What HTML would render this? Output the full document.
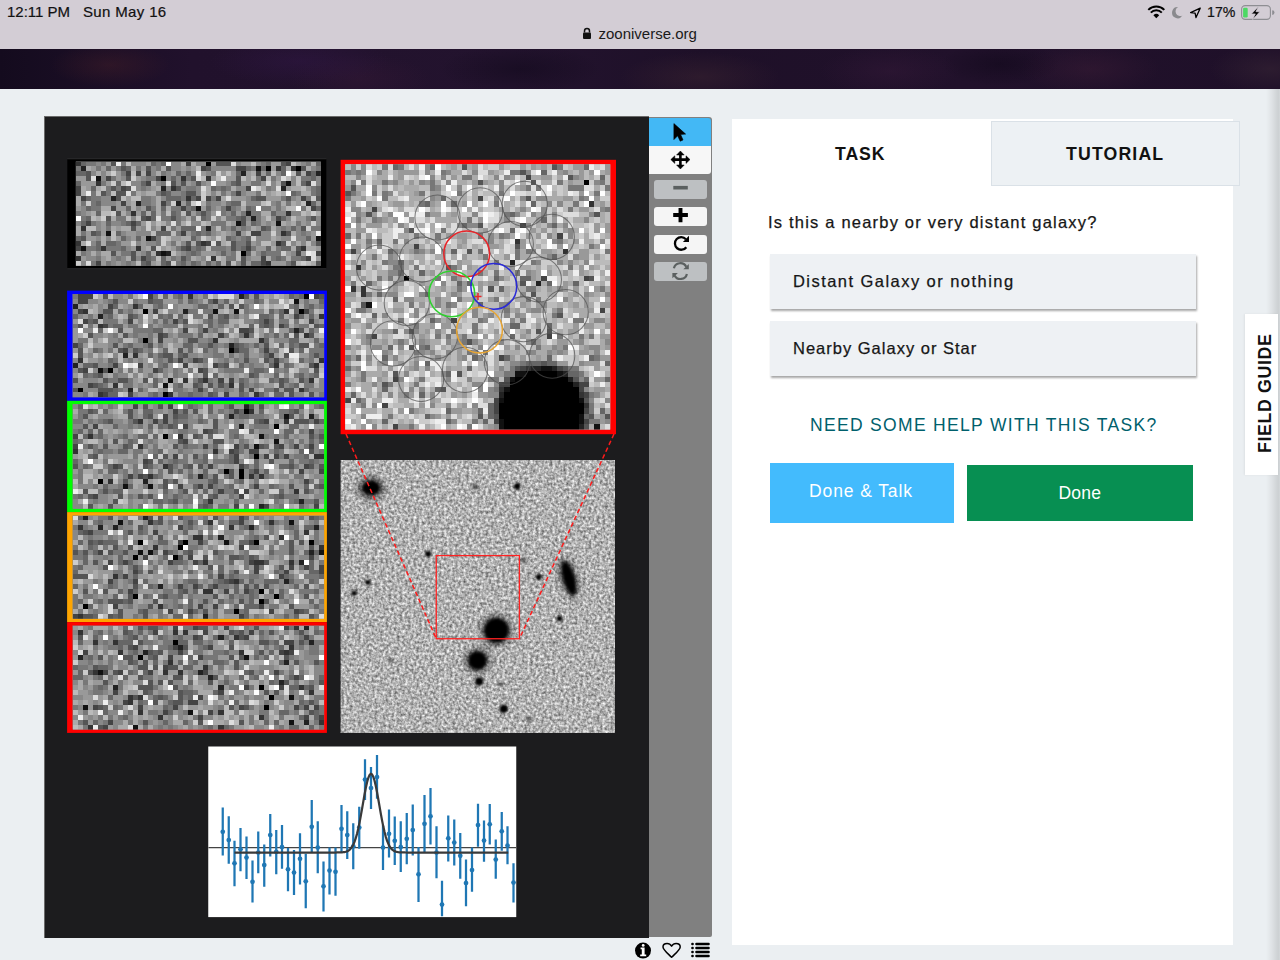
<!DOCTYPE html>
<html><head><meta charset="utf-8">
<style>
html,body{margin:0;padding:0;}
body{width:1280px;height:960px;position:relative;overflow:hidden;background:#ebeff2;font-family:"Liberation Sans",sans-serif;}
.abs{position:absolute;}
#status{left:0;top:0;width:1280px;height:49px;background:#d3cdd5;}
#status .t{position:absolute;top:3px;font-size:15px;color:#111;line-height:20px;-webkit-text-stroke:0.2px #111;}
#hdr{left:0;top:49px;width:1280px;height:40px;background:#1a0f26;overflow:hidden;}
#viewer{left:44px;top:116px;width:605px;height:822px;background:#1c1c1e;border-left:1px solid #6a6a6a;border-top:1px solid #6a6a6a;box-sizing:border-box;}
#tools{left:649px;top:117px;width:63px;height:820px;background:#808080;border-radius:0 3px 2px 0;}
.tb{position:absolute;left:5px;width:53px;height:19px;background:#f5f5f5;border-radius:3px;}
.tb.dis{background:#bdc0c2;}
#panel{left:732px;top:118.6px;width:501px;height:826.4px;background:#fff;}
#tut{left:991px;top:121px;width:249px;height:65px;background:#edf1f4;border:1px solid #dae1e7;box-sizing:border-box;}
.tab{position:absolute;font-weight:bold;font-size:17.7px;letter-spacing:0.9px;color:#111;line-height:20px;}
.q{position:absolute;font-size:16.5px;color:#161616;line-height:20px;-webkit-text-stroke:0.25px #161616;}
.ans{position:absolute;left:770px;width:426px;height:55px;background:#eef1f4;box-shadow:1px 2px 2px rgba(0,0,0,0.35);}
.ans span{position:absolute;left:25px;top:17px;font-size:16.5px;color:#161616;line-height:20px;-webkit-text-stroke:0.25px #161616;}
#help{left:810px;top:414.5px;font-size:17.5px;letter-spacing:1.32px;color:#00606c;line-height:20px;}
#dtalk{left:770px;top:463px;width:184px;height:60px;background:#43bbfd;}
#done{left:967px;top:465px;width:226px;height:56px;background:#078f52;}
.btxt{position:absolute;font-size:17.5px;color:#fff;line-height:20px;white-space:nowrap;}
#fg{left:1245px;top:313.5px;width:33px;height:161px;background:#fff;box-shadow:-1px 0 2px rgba(0,0,0,0.06);}
#fgt{position:absolute;left:1258px;top:453px;transform-origin:0 0;transform:rotate(-90deg);font-weight:bold;font-size:17.8px;letter-spacing:0.62px;color:#111;line-height:14px;white-space:nowrap;}
#edge{left:1266px;top:89px;width:14px;height:871px;background:linear-gradient(90deg,rgba(0,0,0,0),rgba(0,0,0,0.05) 40%,rgba(0,0,0,0.11) 75%,rgba(0,0,0,0.13) 88%,rgba(0,0,0,0.1));}
</style></head><body>
<div id="status" class="abs">
  <div class="t" style="left:7px;top:2px;">12:11 PM</div>
  <div class="t" style="left:83px;top:2px;letter-spacing:0.35px;">Sun May 16</div>
  <div class="t" style="left:598.5px;top:24px;-webkit-text-stroke:0;color:#1a1a1a;">zooniverse.org</div>
  <svg class="abs" style="left:582px;top:27px" width="10" height="13" viewBox="0 0 10 13"><path d="M2.5 5.5V4a2.5 2.5 0 0 1 5 0v1.5" fill="none" stroke="#111" stroke-width="1.5"/><rect x="1" y="5.5" width="8" height="6.5" rx="1" fill="#111"/></svg>
  <div class="t" style="left:1207px;top:2px;font-size:14.2px;">17%</div>
  <svg class="abs" style="left:1140px;top:0" width="140" height="26" viewBox="1140 0 140 26">
    <path d="M1156.3 18.2L1159.2 15.3A4.1 4.1 0 0 0 1153.4 15.3Z" fill="#000"/>
    <path d="M1150.8 12.6A7.8 7.8 0 0 1 1161.8 12.6" fill="none" stroke="#000" stroke-width="2"/>
    <path d="M1148.3 9.9A11.3 11.3 0 0 1 1164.3 9.9" fill="none" stroke="#000" stroke-width="2"/>
    <path d="M1178.2 7.1A5.6 5.6 0 1 0 1182.4 15.6A4.3 4.3 0 0 1 1178.2 7.1Z" fill="#8a8a8e"/>
    <path d="M1200.2 8.2L1190.6 12.6L1195.1 13.2L1196 17.6Z" fill="none" stroke="#000" stroke-width="1.3" stroke-linejoin="round"/>
    <rect x="1241.6" y="5.6" width="28.8" height="13.8" rx="3.6" fill="none" stroke="#8e8e93" stroke-width="1.1"/>
    <rect x="1243.1" y="7.7" width="4.6" height="9.8" rx="1.2" fill="#4cd964"/>
    <path d="M1258.5 6.6L1251.4 13.9H1255.3L1252.7 19.6L1259.8 11.7H1255.9Z" fill="#000" stroke="#d3cdd5" stroke-width="0.7"/>
    <path d="M1272.2 10.3A2.3 2.3 0 0 1 1272.2 14.9Z" fill="#8e8e93"/>
  </svg>
</div>
<div id="hdr" class="abs">
  <div class="abs" style="left:0;top:0;width:1280px;height:40px;background:
  radial-gradient(ellipse 60px 22px at 110px 16px, rgba(80,35,40,0.35), transparent),
  radial-gradient(ellipse 90px 25px at 300px 12px, rgba(55,25,80,0.35), transparent),
  radial-gradient(ellipse 70px 25px at 360px 30px, rgba(70,30,60,0.25), transparent),
  radial-gradient(ellipse 80px 25px at 700px 28px, rgba(80,50,55,0.3), transparent),
  radial-gradient(ellipse 80px 25px at 520px 20px, rgba(10,5,20,0.4), transparent),
  radial-gradient(ellipse 70px 25px at 890px 22px, rgba(65,30,65,0.3), transparent),
  radial-gradient(ellipse 60px 22px at 1000px 15px, rgba(10,5,20,0.4), transparent),
  radial-gradient(ellipse 70px 25px at 1090px 20px, rgba(75,35,60,0.3), transparent),
  radial-gradient(ellipse 60px 25px at 1270px 20px, rgba(70,50,60,0.35), transparent),
  linear-gradient(90deg,#140b1e,#21112c 15%,#23132e 40%,#1e1028 55%,#21112b 75%,#1f1029);"></div>
</div>
<div id="viewer" class="abs"></div>
<div id="tools" class="abs">
  <div class="abs" style="left:0;top:1px;width:62px;height:28px;background:#43b8f5;border-radius:0 3px 0 0;"></div>
  <div class="abs" style="left:0;top:29px;width:62px;height:28px;background:#f7f7f7;border-radius:0 0 3px 0;"></div>
  <div class="tb dis" style="top:63px;"></div>
  <div class="tb" style="top:90px;"></div>
  <div class="tb" style="top:118px;"></div>
  <div class="tb dis" style="top:145px;"></div>
</div>
<svg class="abs" style="left:649px;top:115px" width="63" height="180" viewBox="649 115 63 180">
  <path d="M673.9 123.6L685.6 134.1L680.6 134.4L683 139.9L680.2 141.2L677.7 135.8L673.9 139.6Z" fill="#000" stroke="#000" stroke-width="0.6" stroke-linejoin="round"/>
  <path d="M680.4 153.5V166.5M673.5 159.6H687.5" stroke="#000" stroke-width="2.6"/>
  <path d="M680.4 151L684.2 155H676.6ZM680.4 169L684.2 165H676.6ZM670.8 159.6L674.8 155.8V163.4ZM690 159.6L686 155.8V163.4Z" fill="#000" stroke="#000" stroke-width="0.5" stroke-linejoin="round"/>
  <path d="M673.3 187.7H687.8" stroke="#5b6060" stroke-width="3.6" stroke-linecap="butt" stroke-linejoin="round"/>
  <path d="M673.2 215.05H687.9M680.5 208V222.2" stroke="#000" stroke-width="3.9"/>
  <path d="M686.3 247.2A6.3 6.3 0 1 1 685.9 239.2" fill="none" stroke="#000" stroke-width="2.3"/>
  <path d="M689 235.8V241.9H682.9Z" fill="#000"/>
  <path d="M673.9 268.3A6.6 6.6 0 0 1 686.2 266.8" fill="none" stroke="#5b6060" stroke-width="2.2"/>
  <path d="M688.8 263.9V269.3H683.3Z" fill="#5b6060"/>
  <path d="M686.9 273.9A6.6 6.6 0 0 1 674.6 275.4" fill="none" stroke="#5b6060" stroke-width="2.2"/>
  <path d="M672.4 278.3V272.9H677.9Z" fill="#5b6060"/>
</svg>
<svg class="abs" style="left:630px;top:938px" width="85" height="22" viewBox="630 938 85 22">
  <circle cx="643" cy="950.6" r="8" fill="#000"/>
  <circle cx="643.2" cy="945.4" r="1.4" fill="#fff"/>
  <path d="M640.6 947.6H644.6V954.6H646.2V956.3H640.2V954.6H641.8V949.3H640.6Z" fill="#fff"/>
  <path d="M671.6 957.3C667.6 953.3 663 949.6 663 946.9C663 944.6 664.9 943.5 667.1 943.5C669.1 943.5 670.7 944.7 671.6 946.2C672.5 944.7 674.1 943.5 676.1 943.5C678.3 943.5 680.2 944.6 680.2 946.9C680.2 949.6 675.6 953.3 671.6 957.3Z" fill="none" stroke="#000" stroke-width="1.5" stroke-linejoin="round"/>
  <path d="M692.4 944H692.6M692.4 948H692.6M692.4 952H692.6M692.4 956H692.6" stroke="#000" stroke-width="2.5" stroke-linecap="round"/>
  <path d="M696.4 944H708.6M696.4 948H708.6M696.4 952H708.6M696.4 956H708.6" stroke="#000" stroke-width="2.4" stroke-linecap="round"/>
</svg>
<svg class="abs" style="left:0;top:0" width="1280" height="960" viewBox="0 0 1280 960"><defs><filter id="nz" x="0" y="0" width="100%" height="100%" color-interpolation-filters="sRGB"><feTurbulence type="fractalNoise" baseFrequency="0.36" numOctaves="2" seed="3" result="t"/><feColorMatrix in="t" type="matrix" values="0.85 0 0 0 0.27  0.85 0 0 0 0.27  0.85 0 0 0 0.27  0 0 0 0 1"/><feGaussianBlur stdDeviation="0.5"/></filter><filter id="soft" x="0" y="0" width="100%" height="100%"><feGaussianBlur stdDeviation="0.55"/></filter><filter id="bl" x="-1" y="-1" width="3" height="3"><feGaussianBlur stdDeviation="1.6"/></filter><filter id="bl2" x="-1" y="-1" width="3" height="3"><feGaussianBlur stdDeviation="1"/></filter><filter id="bl3" x="-1" y="-1" width="3" height="3"><feGaussianBlur stdDeviation="3"/></filter></defs><rect x="67.3" y="159.2" width="259" height="109.1" fill="#000"/>
<rect x="67.3" y="158.2" width="259" height="1" fill="#2a2a2c"/><rect x="67.3" y="268.3" width="259" height="1" fill="#2a2a2c"/>
<rect x="75.8" y="161.5" width="245" height="104.3" fill="#868686"/><svg x="75.8" y="161.5" width="245" height="104.3" viewBox="0 0 49 21" preserveAspectRatio="none" shape-rendering="crispEdges"><g stroke-width="1"><path stroke="#000000" d="M26 0.5h1M38 1.5h1M44 1.5h1M17 3.5h1M33 18.5h1"/><path stroke="#111111" d="M36 1.5h1M4 3.5h1M42 4.5h1M24 9.5h1M32 12.5h1M40 12.5h1M6 14.5h1M14 15.5h1M48 15.5h1M1 17.5h1M17 18.5h1"/><path stroke="#222222" d="M1 1.5h1M33 2.5h1M48 2.5h1M17 5.5h1M41 5.5h1M7 7.5h1M12 8.5h1M20 8.5h1M46 8.5h1M34 10.5h1M35 11.5h1M26 13.5h1M18 18.5h1"/><path stroke="#333333" d="M0 0.5h1M40 1.5h1M43 1.5h1M21 3.5h1M26 3.5h1M4 4.5h1M19 5.5h1M22 7.5h1M11 10.5h1M42 10.5h1M1 13.5h1M41 14.5h1M0 16.5h1M25 16.5h1M40 16.5h1M5 17.5h1M12 17.5h1M45 17.5h1M16 18.5h1M0 19.5h1M27 19.5h1M38 20.5h1"/><path stroke="#444444" d="M22 0.5h1M42 0.5h1M25 1.5h1M32 1.5h2M10 2.5h1M12 2.5h1M14 2.5h1M36 2.5h1M46 2.5h1M6 3.5h1M16 3.5h1M37 3.5h1M14 4.5h1M46 4.5h1M0 5.5h1M9 5.5h1M34 5.5h1M0 6.5h1M32 6.5h1M1 7.5h1M24 7.5h1M26 7.5h1M28 7.5h1M45 7.5h1M9 8.5h1M17 8.5h1M7 9.5h1M21 9.5h1M30 9.5h1M47 9.5h1M14 11.5h1M40 11.5h1M2 12.5h1M11 12.5h1M17 13.5h1M21 14.5h1M32 14.5h1M35 14.5h2M15 15.5h1M26 16.5h1M0 17.5h1M22 17.5h1M34 17.5h1M44 18.5h1M48 18.5h1M13 19.5h1M37 19.5h1M46 19.5h1M4 20.5h1M37 20.5h1"/><path stroke="#555555" d="M7 0.5h1M28 0.5h3M41 0.5h1M9 1.5h1M14 1.5h1M18 1.5h1M26 1.5h1M45 1.5h1M2 2.5h1M44 2.5h1M2 3.5h1M10 3.5h1M23 3.5h1M32 3.5h1M19 4.5h1M21 4.5h1M24 4.5h1M32 4.5h1M41 4.5h1M7 5.5h1M10 5.5h1M20 5.5h1M5 6.5h1M8 6.5h2M17 6.5h1M22 6.5h2M8 7.5h1M36 7.5h2M42 7.5h1M48 7.5h1M14 9.5h1M8 10.5h1M22 10.5h1M25 10.5h1M6 11.5h1M13 11.5h1M19 11.5h1M33 11.5h1M47 11.5h1M33 12.5h1M11 13.5h1M37 13.5h1M45 13.5h1M3 14.5h1M42 14.5h1M1 15.5h1M22 16.5h1M24 16.5h1M28 16.5h1M31 16.5h1M34 16.5h1M41 16.5h1M48 16.5h1M15 17.5h1M21 17.5h1M31 17.5h1M44 17.5h1M7 18.5h1M11 18.5h1M11 19.5h1M21 19.5h1M33 19.5h1M14 20.5h1M18 20.5h1M30 20.5h1M33 20.5h1M43 20.5h1M48 20.5h1"/><path stroke="#666666" d="M1 0.5h1M15 0.5h1M17 0.5h1M38 0.5h1M48 0.5h1M6 1.5h1M10 1.5h1M34 1.5h1M37 1.5h1M41 1.5h1M0 2.5h2M20 2.5h1M22 2.5h1M32 2.5h1M38 2.5h1M41 2.5h1M47 2.5h1M19 3.5h1M47 3.5h1M0 4.5h1M8 4.5h1M13 4.5h1M31 4.5h1M45 4.5h1M3 5.5h1M27 5.5h1M29 5.5h1M48 5.5h1M18 6.5h1M43 6.5h1M48 6.5h1M2 7.5h1M18 7.5h3M23 7.5h1M35 7.5h1M4 8.5h1M22 8.5h1M31 8.5h2M47 8.5h1M2 9.5h1M10 9.5h1M17 9.5h1M23 9.5h1M26 9.5h1M34 9.5h1M48 9.5h1M4 10.5h1M13 10.5h1M15 10.5h1M19 10.5h1M31 10.5h1M39 10.5h1M2 11.5h1M15 11.5h1M25 11.5h1M32 11.5h1M41 11.5h1M1 12.5h1M6 12.5h1M10 12.5h1M12 12.5h1M35 12.5h1M21 13.5h3M31 13.5h1M38 13.5h1M43 13.5h1M4 14.5h1M8 14.5h1M16 14.5h3M24 14.5h1M26 14.5h1M0 15.5h1M9 15.5h1M12 15.5h1M23 15.5h1M30 15.5h1M34 15.5h1M46 15.5h1M4 16.5h1M6 16.5h2M4 17.5h1M9 17.5h1M24 17.5h1M33 17.5h1M38 17.5h1M41 17.5h2M14 18.5h1M23 18.5h1M29 18.5h1M34 18.5h1M37 18.5h1M14 19.5h1M17 19.5h1M40 19.5h1M45 19.5h1M13 20.5h1M17 20.5h1M21 20.5h1M23 20.5h1M26 20.5h1M28 20.5h1M35 20.5h2"/><path stroke="#777777" d="M2 0.5h2M5 0.5h1M9 0.5h1M16 0.5h1M37 0.5h1M46 0.5h1M0 1.5h1M4 1.5h1M8 1.5h1M12 1.5h1M16 1.5h1M35 1.5h1M48 1.5h1M9 2.5h1M17 2.5h1M27 2.5h1M7 3.5h1M14 3.5h2M22 3.5h1M36 3.5h1M39 3.5h1M45 3.5h2M5 4.5h1M17 4.5h1M35 4.5h2M6 5.5h1M8 5.5h1M13 5.5h1M22 5.5h2M28 5.5h1M30 5.5h1M38 5.5h1M47 5.5h1M3 6.5h1M6 6.5h1M11 6.5h1M16 6.5h1M21 6.5h1M29 6.5h1M31 6.5h1M36 6.5h1M44 6.5h1M47 6.5h1M3 7.5h2M13 7.5h2M21 7.5h1M27 7.5h1M41 7.5h1M46 7.5h1M1 8.5h1M3 8.5h1M13 8.5h2M18 8.5h1M26 8.5h1M30 8.5h1M40 8.5h1M42 8.5h1M3 9.5h2M15 9.5h1M19 9.5h2M22 9.5h1M29 9.5h1M31 9.5h1M35 9.5h1M37 9.5h2M40 9.5h1M45 9.5h1M0 10.5h1M17 10.5h1M20 10.5h1M24 10.5h1M26 10.5h1M29 10.5h1M33 10.5h1M35 10.5h2M1 11.5h1M8 11.5h2M17 11.5h2M20 11.5h1M23 11.5h1M26 11.5h1M30 11.5h2M36 11.5h1M46 11.5h1M3 12.5h1M9 12.5h1M20 12.5h1M27 12.5h3M36 12.5h1M44 12.5h1M6 13.5h1M19 13.5h1M25 13.5h1M29 13.5h1M33 13.5h1M41 13.5h1M47 13.5h2M1 14.5h1M20 14.5h1M23 14.5h1M25 14.5h1M45 14.5h1M16 15.5h1M31 15.5h1M33 15.5h1M8 16.5h1M16 16.5h1M19 16.5h1M32 16.5h2M2 17.5h2M6 17.5h3M20 17.5h1M23 17.5h1M25 17.5h1M27 17.5h3M32 17.5h1M35 17.5h1M40 17.5h1M1 18.5h1M9 18.5h2M22 18.5h1M24 18.5h1M31 18.5h1M38 18.5h3M4 19.5h1M8 19.5h1M15 19.5h1M19 19.5h1M22 19.5h1M30 19.5h2M39 19.5h1M41 19.5h1M43 19.5h2M3 20.5h1M6 20.5h1M10 20.5h1M20 20.5h1M24 20.5h1M42 20.5h1"/><path stroke="#888888" d="M4 0.5h1M11 0.5h3M19 0.5h2M24 0.5h2M32 0.5h1M36 0.5h1M45 0.5h1M15 1.5h1M19 1.5h2M22 1.5h1M27 1.5h5M47 1.5h1M3 2.5h1M5 2.5h1M15 2.5h1M18 2.5h1M21 2.5h1M23 2.5h1M26 2.5h1M40 2.5h1M5 3.5h1M9 3.5h1M13 3.5h1M18 3.5h1M20 3.5h1M43 3.5h1M48 3.5h1M11 4.5h2M16 4.5h1M20 4.5h1M23 4.5h1M25 4.5h1M30 4.5h1M39 4.5h1M43 4.5h1M48 4.5h1M12 5.5h1M14 5.5h1M18 5.5h1M21 5.5h1M24 5.5h1M32 5.5h2M39 5.5h1M19 6.5h2M24 6.5h1M27 6.5h1M33 6.5h1M5 7.5h2M15 7.5h1M17 7.5h1M34 7.5h1M43 7.5h1M5 8.5h3M15 8.5h1M27 8.5h2M34 8.5h3M39 8.5h1M1 9.5h1M12 9.5h1M27 9.5h1M32 9.5h1M1 10.5h1M10 10.5h1M30 10.5h1M40 10.5h2M43 10.5h2M11 11.5h1M21 11.5h1M28 11.5h1M34 11.5h1M39 11.5h1M42 11.5h1M48 11.5h1M0 12.5h1M4 12.5h1M7 12.5h2M18 12.5h1M23 12.5h2M38 12.5h1M46 12.5h1M48 12.5h1M4 13.5h1M13 13.5h1M15 13.5h1M27 13.5h1M30 13.5h1M32 13.5h1M34 13.5h1M40 13.5h1M42 13.5h1M44 13.5h1M9 14.5h1M12 14.5h3M27 14.5h1M31 14.5h1M37 14.5h2M40 14.5h1M44 14.5h1M46 14.5h1M4 15.5h1M6 15.5h1M10 15.5h1M24 15.5h1M32 15.5h1M36 15.5h3M41 15.5h2M44 15.5h2M3 16.5h1M12 16.5h1M14 16.5h2M21 16.5h1M36 16.5h1M43 16.5h1M45 16.5h1M47 16.5h1M10 17.5h1M30 17.5h1M2 18.5h1M4 18.5h1M13 18.5h1M21 18.5h1M28 18.5h1M30 18.5h1M36 18.5h1M43 18.5h1M2 19.5h2M7 19.5h1M9 19.5h1M12 19.5h1M20 19.5h1M25 19.5h1M34 19.5h1M1 20.5h1M7 20.5h1M9 20.5h1M11 20.5h1M22 20.5h1M27 20.5h1M32 20.5h1"/><path stroke="#999999" d="M6 0.5h1M14 0.5h1M27 0.5h1M33 0.5h2M39 0.5h2M44 0.5h1M3 1.5h1M5 1.5h1M7 1.5h1M13 1.5h1M21 1.5h1M23 1.5h1M39 1.5h1M8 2.5h1M19 2.5h1M25 2.5h1M29 2.5h1M31 2.5h1M34 2.5h1M37 2.5h1M0 3.5h2M8 3.5h1M12 3.5h1M27 3.5h1M30 3.5h2M34 3.5h1M40 3.5h1M1 4.5h3M6 4.5h1M22 4.5h1M26 4.5h1M28 4.5h2M33 4.5h2M37 4.5h1M2 5.5h1M15 5.5h1M42 5.5h1M46 5.5h1M13 6.5h1M30 6.5h1M34 6.5h2M38 6.5h1M10 7.5h1M31 7.5h3M38 7.5h3M44 7.5h1M8 8.5h1M10 8.5h1M21 8.5h1M29 8.5h1M44 8.5h1M48 8.5h1M0 9.5h1M8 9.5h2M13 9.5h1M25 9.5h1M28 9.5h1M39 9.5h1M41 9.5h1M2 10.5h1M12 10.5h1M23 10.5h1M27 10.5h1M32 10.5h1M37 11.5h1M44 11.5h2M5 12.5h1M13 12.5h1M15 12.5h1M31 12.5h1M34 12.5h1M37 12.5h1M39 12.5h1M42 12.5h1M45 12.5h1M5 13.5h1M8 13.5h1M12 13.5h1M20 13.5h1M36 13.5h1M2 14.5h1M5 14.5h1M10 14.5h2M22 14.5h1M28 14.5h1M30 14.5h1M33 14.5h1M47 14.5h1M2 15.5h2M8 15.5h1M11 15.5h1M13 15.5h1M19 15.5h2M27 15.5h1M40 15.5h1M47 15.5h1M9 16.5h2M13 16.5h1M18 16.5h1M35 16.5h1M39 16.5h1M11 17.5h1M13 17.5h1M17 17.5h1M19 17.5h1M36 17.5h2M48 17.5h1M8 18.5h1M12 18.5h1M20 18.5h1M25 18.5h3M42 18.5h1M45 18.5h1M1 19.5h1M5 19.5h1M18 19.5h1M24 19.5h1M35 19.5h2M48 19.5h1M5 20.5h1M8 20.5h1M15 20.5h1M25 20.5h1M34 20.5h1M39 20.5h3"/><path stroke="#aaaaaa" d="M21 0.5h1M23 0.5h1M47 0.5h1M2 1.5h1M11 1.5h1M17 1.5h1M42 1.5h1M46 1.5h1M4 2.5h1M6 2.5h1M13 2.5h1M16 2.5h1M35 2.5h1M45 2.5h1M15 4.5h1M40 4.5h1M1 5.5h1M4 5.5h1M16 5.5h1M26 5.5h1M31 5.5h1M37 5.5h1M43 5.5h2M1 6.5h1M12 6.5h1M14 6.5h2M26 6.5h1M28 6.5h1M39 6.5h1M41 6.5h1M45 6.5h2M0 7.5h1M16 7.5h1M29 7.5h1M0 8.5h1M11 8.5h1M16 8.5h1M25 8.5h1M41 8.5h1M43 8.5h1M5 9.5h2M11 9.5h1M16 9.5h1M18 9.5h1M33 9.5h1M3 10.5h1M9 10.5h1M14 10.5h1M16 10.5h1M37 10.5h2M46 10.5h1M48 10.5h1M4 11.5h1M7 11.5h1M22 11.5h1M29 11.5h1M17 12.5h1M21 12.5h1M26 12.5h1M30 12.5h1M41 12.5h1M43 12.5h1M0 13.5h1M7 13.5h1M9 13.5h2M16 13.5h1M35 13.5h1M39 13.5h1M0 14.5h1M29 14.5h1M43 14.5h1M5 15.5h1M21 15.5h2M26 15.5h1M29 15.5h1M39 15.5h1M1 16.5h1M5 16.5h1M20 16.5h1M23 16.5h1M29 16.5h1M44 16.5h1M14 17.5h1M18 17.5h1M39 17.5h1M43 17.5h1M46 17.5h2M0 18.5h1M3 18.5h1M5 18.5h2M15 18.5h1M35 18.5h1M6 19.5h1M10 19.5h1M23 19.5h1M29 19.5h1M38 19.5h1M42 19.5h1M16 20.5h1M29 20.5h1M47 20.5h1"/><path stroke="#bbbbbb" d="M10 0.5h1M35 0.5h1M43 0.5h1M24 1.5h1M11 2.5h1M30 2.5h1M39 2.5h1M43 2.5h1M25 3.5h1M28 3.5h1M33 3.5h1M35 3.5h1M38 3.5h1M42 3.5h1M44 3.5h1M9 4.5h1M44 4.5h1M5 5.5h1M45 5.5h1M4 6.5h1M7 6.5h1M37 6.5h1M40 6.5h1M9 7.5h1M11 7.5h2M33 8.5h1M37 8.5h1M45 8.5h1M42 9.5h2M46 9.5h1M5 10.5h2M18 10.5h1M21 10.5h1M45 10.5h1M3 11.5h1M10 11.5h1M12 11.5h1M38 11.5h1M43 11.5h1M16 12.5h1M25 12.5h1M2 13.5h2M18 13.5h1M28 13.5h1M7 14.5h1M15 14.5h1M19 14.5h1M34 14.5h1M7 15.5h1M18 15.5h1M30 16.5h1M37 16.5h2M46 16.5h1M26 17.5h1M19 18.5h1M32 18.5h1M16 19.5h1M28 19.5h1M32 19.5h1M12 20.5h1M31 20.5h1M44 20.5h1M46 20.5h1"/><path stroke="#cccccc" d="M7 2.5h1M28 2.5h1M11 3.5h1M7 4.5h1M36 5.5h1M25 6.5h1M25 7.5h1M47 7.5h1M2 8.5h1M19 8.5h1M23 8.5h1M38 8.5h1M7 10.5h1M47 10.5h1M5 11.5h1M24 11.5h1M27 11.5h1M14 12.5h1M22 12.5h1M47 12.5h1M14 13.5h1M46 13.5h1M39 14.5h1M17 15.5h1M25 15.5h1M28 15.5h1M35 15.5h1M11 16.5h1M17 16.5h1M42 16.5h1M16 17.5h1M41 18.5h1M26 19.5h1M0 20.5h1M19 20.5h1M45 20.5h1"/><path stroke="#dddddd" d="M31 0.5h1M3 3.5h1M24 3.5h1M41 3.5h1M10 4.5h1M18 4.5h1M38 4.5h1M47 4.5h1M11 5.5h1M25 5.5h1M40 5.5h1M10 6.5h1M30 7.5h1M16 11.5h1M19 12.5h1M43 15.5h1M2 16.5h1M27 16.5h1M47 18.5h1M47 19.5h1M2 20.5h1"/><path stroke="#eeeeee" d="M8 0.5h1M24 2.5h1M29 3.5h1M35 5.5h1M2 6.5h1M24 8.5h1M28 10.5h1M24 13.5h1M48 14.5h1M46 18.5h1"/><path stroke="#ffffff" d="M18 0.5h1M42 2.5h1M27 4.5h1M42 6.5h1M36 9.5h1M44 9.5h1M0 11.5h1"/></g></svg>
<rect x="67.1" y="290.6" width="259.8" height="110.2" fill="#0000ff"/>
<rect x="72.5" y="294.0" width="251.7" height="103.39999999999999" fill="#868686"/><svg x="72.5" y="294.0" width="251.7" height="103.39999999999999" viewBox="0 0 50 21" preserveAspectRatio="none" shape-rendering="crispEdges"><g stroke-width="1"><path stroke="#000000" d="M46 0.5h1M14 3.5h1M45 3.5h1M14 9.5h1M31 11.5h1M7 15.5h1M1 19.5h1M18 20.5h1"/><path stroke="#111111" d="M44 1.5h1M28 3.5h1M32 3.5h1M5 15.5h1M19 17.5h1M18 18.5h1"/><path stroke="#222222" d="M33 0.5h1M0 2.5h1M22 3.5h1M5 4.5h1M44 7.5h1M31 10.5h1M10 12.5h1M0 14.5h1M11 19.5h1"/><path stroke="#333333" d="M23 0.5h1M12 2.5h1M2 3.5h1M42 3.5h1M49 4.5h1M5 6.5h1M34 8.5h1M46 8.5h1M28 9.5h1M37 9.5h1M12 12.5h1M1 13.5h1M49 13.5h1M40 14.5h1M48 14.5h1M22 17.5h1M26 17.5h1M47 17.5h1M8 18.5h1M31 18.5h1M45 19.5h1M5 20.5h1M19 20.5h1M36 20.5h1"/><path stroke="#444444" d="M1 0.5h3M15 0.5h1M48 0.5h1M1 1.5h2M28 1.5h1M7 2.5h1M1 3.5h1M16 3.5h1M46 3.5h1M44 4.5h1M2 5.5h1M11 5.5h1M20 5.5h1M38 5.5h1M47 5.5h1M6 6.5h1M41 6.5h1M22 7.5h1M26 7.5h1M33 7.5h2M17 8.5h1M29 8.5h1M17 9.5h1M0 10.5h1M10 11.5h1M32 11.5h1M38 11.5h1M39 12.5h1M21 13.5h1M24 13.5h1M40 13.5h1M8 14.5h1M13 14.5h1M22 14.5h1M28 14.5h1M2 15.5h1M16 15.5h1M25 15.5h1M29 17.5h1M31 17.5h1M3 18.5h1M25 19.5h1M35 19.5h1M6 20.5h1M11 20.5h1M30 20.5h1"/><path stroke="#555555" d="M6 0.5h1M34 0.5h1M36 0.5h1M49 0.5h1M8 1.5h1M15 1.5h1M31 2.5h1M33 2.5h1M6 3.5h2M11 4.5h1M27 4.5h1M30 4.5h1M4 5.5h1M22 5.5h1M1 6.5h1M38 6.5h1M48 6.5h1M9 7.5h1M35 7.5h1M45 7.5h1M3 8.5h1M10 8.5h1M18 8.5h1M44 8.5h1M47 8.5h1M23 9.5h2M8 10.5h1M15 10.5h1M27 10.5h1M32 10.5h1M38 10.5h1M45 10.5h2M1 11.5h1M9 11.5h1M12 11.5h1M21 11.5h1M43 11.5h1M1 12.5h1M18 12.5h2M22 12.5h1M42 12.5h1M48 12.5h1M19 13.5h1M25 13.5h1M34 13.5h1M38 13.5h1M4 14.5h1M30 14.5h1M47 14.5h1M1 15.5h1M6 15.5h1M26 15.5h1M48 15.5h1M5 16.5h1M26 16.5h1M35 16.5h1M0 17.5h1M6 17.5h1M9 17.5h2M14 17.5h1M25 17.5h1M41 17.5h1M45 17.5h1M4 18.5h1M24 18.5h1M27 18.5h1M29 18.5h1M33 18.5h1M41 18.5h1M0 19.5h1M5 19.5h3M33 19.5h1M40 19.5h1M42 19.5h2M27 20.5h1M43 20.5h1M47 20.5h1"/><path stroke="#666666" d="M18 0.5h1M21 0.5h1M43 0.5h1M45 0.5h1M16 1.5h2M23 1.5h1M27 1.5h1M30 1.5h1M36 1.5h1M49 1.5h1M8 2.5h1M13 2.5h1M17 2.5h1M25 2.5h2M29 2.5h1M44 2.5h1M47 2.5h1M9 3.5h1M39 3.5h1M41 3.5h1M44 3.5h1M0 4.5h1M7 4.5h1M12 4.5h1M17 4.5h1M19 4.5h1M21 4.5h1M29 4.5h1M37 4.5h2M41 4.5h1M45 4.5h1M47 4.5h1M3 5.5h1M18 5.5h1M27 5.5h1M29 5.5h2M37 5.5h1M39 5.5h1M8 6.5h2M27 6.5h1M35 6.5h1M37 6.5h1M39 6.5h1M42 6.5h1M49 6.5h1M5 7.5h1M16 7.5h2M43 7.5h1M47 7.5h1M25 8.5h1M40 8.5h1M42 8.5h1M38 9.5h1M43 9.5h2M48 9.5h1M1 10.5h1M11 10.5h1M22 10.5h2M33 10.5h1M36 10.5h1M41 10.5h1M43 10.5h1M49 10.5h1M4 11.5h1M13 11.5h1M18 11.5h1M23 11.5h1M26 11.5h1M33 11.5h2M45 11.5h1M15 12.5h1M17 12.5h1M21 12.5h1M34 12.5h1M38 12.5h1M7 13.5h1M45 13.5h1M2 14.5h2M18 14.5h1M29 14.5h1M33 14.5h1M39 14.5h1M42 14.5h1M17 15.5h1M36 15.5h2M2 16.5h1M4 16.5h1M28 16.5h1M36 16.5h1M40 16.5h1M45 16.5h1M48 16.5h1M16 17.5h1M33 17.5h1M39 17.5h1M42 17.5h1M5 18.5h1M16 18.5h1M21 18.5h1M25 18.5h1M44 18.5h1M8 19.5h1M13 19.5h1M46 19.5h1M7 20.5h2M16 20.5h1M23 20.5h1M28 20.5h1M33 20.5h1M37 20.5h1M40 20.5h2"/><path stroke="#777777" d="M0 0.5h1M11 0.5h1M16 0.5h1M20 0.5h1M26 0.5h1M44 0.5h1M7 1.5h1M12 1.5h1M21 1.5h1M24 1.5h1M37 1.5h1M46 1.5h1M16 2.5h1M34 2.5h1M43 2.5h1M46 2.5h1M49 2.5h1M11 3.5h1M23 3.5h2M26 3.5h2M34 3.5h1M47 3.5h1M3 4.5h1M6 4.5h1M18 4.5h1M24 4.5h2M32 4.5h1M39 4.5h1M6 5.5h3M16 5.5h1M21 5.5h1M26 5.5h1M36 5.5h1M41 5.5h2M44 5.5h1M0 6.5h1M3 6.5h1M7 6.5h1M11 6.5h2M15 6.5h1M18 6.5h3M22 6.5h1M25 6.5h1M29 6.5h1M45 6.5h2M12 7.5h4M25 7.5h1M28 7.5h1M39 7.5h1M8 8.5h1M12 8.5h1M15 8.5h1M21 8.5h3M30 8.5h1M33 8.5h1M35 8.5h1M38 8.5h1M1 9.5h2M9 9.5h1M13 9.5h1M15 9.5h1M27 9.5h1M10 10.5h1M14 10.5h1M17 10.5h1M25 10.5h2M28 10.5h1M30 10.5h1M34 10.5h1M44 10.5h1M48 10.5h1M5 11.5h1M7 11.5h1M15 11.5h1M28 11.5h1M37 11.5h1M40 11.5h1M47 11.5h3M28 12.5h2M31 12.5h1M47 12.5h1M49 12.5h1M8 13.5h1M11 13.5h1M17 13.5h1M20 13.5h1M23 13.5h1M26 13.5h1M30 13.5h1M32 13.5h1M39 13.5h1M41 13.5h1M47 13.5h1M7 14.5h1M17 14.5h1M35 14.5h1M43 14.5h1M9 15.5h1M11 15.5h1M13 15.5h1M20 15.5h1M23 15.5h1M30 15.5h4M35 15.5h1M38 15.5h1M40 15.5h1M42 15.5h1M3 16.5h1M8 16.5h1M15 16.5h1M20 16.5h1M44 16.5h1M47 16.5h1M7 17.5h2M11 17.5h1M24 17.5h1M27 17.5h1M34 17.5h1M40 17.5h1M46 17.5h1M6 18.5h1M10 18.5h2M20 18.5h1M30 18.5h1M34 18.5h1M36 18.5h1M43 18.5h1M46 18.5h2M9 19.5h1M20 19.5h2M24 19.5h1M26 19.5h1M28 19.5h1M30 19.5h1M38 19.5h2M2 20.5h1M15 20.5h1M21 20.5h2M24 20.5h2M34 20.5h1M49 20.5h1"/><path stroke="#888888" d="M8 0.5h2M24 0.5h1M0 1.5h1M3 1.5h2M6 1.5h1M9 1.5h2M13 1.5h2M25 1.5h1M29 1.5h1M32 1.5h1M34 1.5h2M39 1.5h2M5 2.5h1M11 2.5h1M18 2.5h1M20 2.5h1M24 2.5h1M27 2.5h1M48 2.5h1M0 3.5h1M5 3.5h1M10 3.5h1M19 3.5h2M35 3.5h3M40 3.5h1M1 4.5h1M13 4.5h1M31 4.5h1M34 4.5h1M10 5.5h1M13 5.5h1M19 5.5h1M28 5.5h1M34 5.5h2M48 5.5h1M17 6.5h1M23 6.5h2M28 6.5h1M32 6.5h1M44 6.5h1M2 7.5h2M21 7.5h1M27 7.5h1M31 7.5h1M48 7.5h1M4 8.5h2M7 8.5h1M11 8.5h1M13 8.5h2M19 8.5h1M39 8.5h1M4 9.5h1M7 9.5h2M20 9.5h1M22 9.5h1M25 9.5h2M32 9.5h1M40 9.5h3M7 10.5h1M12 10.5h2M29 10.5h1M35 10.5h1M37 10.5h1M11 11.5h1M14 11.5h1M27 11.5h1M39 11.5h1M3 12.5h1M8 12.5h1M16 12.5h1M23 12.5h2M26 12.5h2M33 12.5h1M37 12.5h1M0 13.5h1M5 13.5h1M10 13.5h1M13 13.5h1M16 13.5h1M18 13.5h1M22 13.5h1M29 13.5h1M33 13.5h1M35 13.5h2M42 13.5h1M46 13.5h1M5 14.5h2M9 14.5h1M15 14.5h1M26 14.5h1M34 14.5h1M36 14.5h2M0 15.5h1M4 15.5h1M18 15.5h1M21 15.5h1M29 15.5h1M41 15.5h1M45 15.5h2M9 16.5h2M12 16.5h1M18 16.5h1M21 16.5h2M31 16.5h1M42 16.5h1M46 16.5h1M2 17.5h3M17 17.5h1M28 17.5h1M36 17.5h1M49 17.5h1M0 18.5h3M13 18.5h1M15 18.5h1M28 18.5h1M35 18.5h1M37 18.5h1M42 18.5h1M49 18.5h1M2 19.5h3M10 19.5h1M14 19.5h1M18 19.5h1M22 19.5h1M29 19.5h1M31 19.5h1M47 19.5h3M0 20.5h2M12 20.5h1M17 20.5h1M26 20.5h1M38 20.5h1M44 20.5h2"/><path stroke="#999999" d="M10 0.5h1M22 0.5h1M25 0.5h1M32 0.5h1M35 0.5h1M37 0.5h1M39 0.5h1M42 0.5h1M5 1.5h1M18 1.5h3M22 1.5h1M45 1.5h1M47 1.5h2M1 2.5h1M3 2.5h1M6 2.5h1M10 2.5h1M21 2.5h3M28 2.5h1M35 2.5h1M12 3.5h1M15 3.5h1M21 3.5h1M31 3.5h1M2 4.5h1M4 4.5h1M8 4.5h1M15 4.5h1M22 4.5h1M28 4.5h1M33 4.5h1M43 4.5h1M46 4.5h1M48 4.5h1M0 5.5h1M15 5.5h1M17 5.5h1M49 5.5h1M10 6.5h1M13 6.5h1M16 6.5h1M30 6.5h1M0 7.5h1M19 7.5h1M29 7.5h1M37 7.5h1M41 7.5h2M0 8.5h1M6 8.5h1M16 8.5h1M20 8.5h1M24 8.5h1M27 8.5h1M37 8.5h1M41 8.5h1M0 9.5h1M12 9.5h1M18 9.5h2M31 9.5h1M47 9.5h1M49 9.5h1M2 10.5h1M4 10.5h3M9 10.5h1M16 10.5h1M18 10.5h1M20 10.5h2M24 10.5h1M0 11.5h1M3 11.5h1M6 11.5h1M17 11.5h1M22 11.5h1M30 11.5h1M35 11.5h1M44 11.5h1M2 12.5h1M5 12.5h1M13 12.5h1M20 12.5h1M25 12.5h1M30 12.5h1M32 12.5h1M35 12.5h2M40 12.5h1M45 12.5h2M3 13.5h2M6 13.5h1M12 13.5h1M14 13.5h1M28 13.5h1M31 13.5h1M1 14.5h1M14 14.5h1M19 14.5h1M25 14.5h1M8 15.5h1M14 15.5h2M19 15.5h1M0 16.5h1M6 16.5h1M14 16.5h1M16 16.5h1M24 16.5h1M30 16.5h1M32 16.5h1M34 16.5h1M38 16.5h2M1 17.5h1M5 17.5h1M12 17.5h1M20 17.5h1M32 17.5h1M35 17.5h1M43 17.5h1M12 18.5h1M14 18.5h1M38 18.5h2M17 19.5h1M23 19.5h1M32 19.5h1M34 19.5h1M36 19.5h1M41 19.5h1M4 20.5h1M13 20.5h2M20 20.5h1M31 20.5h2M48 20.5h1"/><path stroke="#aaaaaa" d="M5 0.5h1M12 0.5h1M19 0.5h1M28 0.5h1M38 0.5h1M41 0.5h1M26 1.5h1M31 1.5h1M42 1.5h1M2 2.5h1M4 2.5h1M9 2.5h1M14 2.5h2M30 2.5h1M37 2.5h1M39 2.5h1M45 2.5h1M4 3.5h1M8 3.5h1M13 3.5h1M17 3.5h1M29 3.5h1M49 3.5h1M10 4.5h1M42 4.5h1M9 5.5h1M12 5.5h1M25 5.5h1M31 5.5h2M40 5.5h1M46 5.5h1M4 6.5h1M31 6.5h1M40 6.5h1M43 6.5h1M10 7.5h2M18 7.5h1M24 7.5h1M46 7.5h1M1 8.5h1M9 8.5h1M26 8.5h1M28 8.5h1M32 8.5h1M48 8.5h1M5 9.5h1M16 9.5h1M21 9.5h1M29 9.5h2M33 9.5h4M39 9.5h1M45 9.5h2M39 10.5h1M42 10.5h1M8 11.5h1M20 11.5h1M24 11.5h1M29 11.5h1M36 11.5h1M11 12.5h1M14 12.5h1M48 13.5h1M24 14.5h1M32 14.5h1M38 14.5h1M41 14.5h1M44 14.5h1M46 14.5h1M49 14.5h1M27 15.5h1M7 16.5h1M19 16.5h1M25 16.5h1M29 16.5h1M33 16.5h1M37 16.5h1M13 17.5h1M18 17.5h1M30 17.5h1M44 17.5h1M7 18.5h1M22 18.5h2M26 18.5h1M48 18.5h1M44 19.5h1M3 20.5h1M29 20.5h1M35 20.5h1M42 20.5h1M46 20.5h1"/><path stroke="#bbbbbb" d="M7 0.5h1M17 0.5h1M40 0.5h1M38 1.5h1M40 2.5h2M3 3.5h1M30 3.5h1M33 3.5h1M38 3.5h1M48 3.5h1M9 4.5h1M20 4.5h1M26 4.5h1M40 4.5h1M5 5.5h1M24 5.5h1M33 5.5h1M43 5.5h1M45 5.5h1M21 6.5h1M26 6.5h1M33 6.5h2M47 6.5h1M8 7.5h1M20 7.5h1M23 7.5h1M36 7.5h1M31 8.5h1M45 8.5h1M49 8.5h1M3 9.5h1M10 9.5h2M19 10.5h1M2 11.5h1M19 11.5h1M41 11.5h1M4 12.5h1M6 12.5h1M9 12.5h1M41 12.5h1M2 13.5h1M9 13.5h1M37 13.5h1M16 14.5h1M23 14.5h1M45 14.5h1M10 15.5h1M12 15.5h1M22 15.5h1M28 15.5h1M44 15.5h1M47 15.5h1M49 15.5h1M1 16.5h1M11 16.5h1M13 16.5h1M17 16.5h1M41 16.5h1M43 16.5h1M23 17.5h1M37 17.5h2M48 17.5h1M9 18.5h1M19 18.5h1M32 18.5h1M40 18.5h1M45 18.5h1M12 19.5h1M15 19.5h2M27 19.5h1M37 19.5h1M10 20.5h1M39 20.5h1"/><path stroke="#cccccc" d="M4 0.5h1M13 0.5h1M27 0.5h1M11 1.5h1M33 1.5h1M43 1.5h1M32 2.5h1M38 2.5h1M18 3.5h1M43 3.5h1M16 4.5h1M35 4.5h1M14 5.5h1M2 6.5h1M36 6.5h1M6 7.5h1M30 7.5h1M32 7.5h1M38 7.5h1M2 8.5h1M36 8.5h1M43 8.5h1M6 9.5h1M3 10.5h1M40 10.5h1M47 10.5h1M16 11.5h1M25 11.5h1M46 11.5h1M0 12.5h1M7 12.5h1M43 13.5h1M21 14.5h1M31 14.5h1M3 15.5h1M24 15.5h1M43 15.5h1M49 16.5h1M15 17.5h1M21 17.5h1M17 18.5h1M9 20.5h1"/><path stroke="#dddddd" d="M29 0.5h3M41 1.5h1M42 2.5h1M25 3.5h1M14 4.5h1M23 4.5h1M1 5.5h1M23 5.5h1M40 7.5h1M42 11.5h1M15 13.5h1M44 13.5h1M11 14.5h1M27 14.5h1M27 16.5h1M19 19.5h1"/><path stroke="#eeeeee" d="M36 4.5h1M4 7.5h1M49 7.5h1M43 12.5h2M27 13.5h1M12 14.5h1M34 15.5h1M23 16.5h1"/><path stroke="#ffffff" d="M14 0.5h1M47 0.5h1M19 2.5h1M36 2.5h1M14 6.5h1M1 7.5h1M7 7.5h1M10 14.5h1M20 14.5h1M39 15.5h1"/></g></svg>
<rect x="67.1" y="400.8" width="259.8" height="111.3" fill="#00ff00"/>
<rect x="72.5" y="404.2" width="251.7" height="104.50000000000001" fill="#868686"/><svg x="72.5" y="404.2" width="251.7" height="104.50000000000001" viewBox="0 0 50 21" preserveAspectRatio="none" shape-rendering="crispEdges"><g stroke-width="1"><path stroke="#000000" d="M34 1.5h1M40 4.5h1M18 6.5h1M36 10.5h1M30 13.5h1M33 13.5h1M33 14.5h1M5 15.5h1"/><path stroke="#111111" d="M42 2.5h1M37 6.5h1M40 7.5h1M36 8.5h1M10 16.5h1M15 16.5h1"/><path stroke="#222222" d="M34 0.5h1M31 2.5h1M47 2.5h1M33 4.5h1M25 14.5h1M14 15.5h1M45 19.5h1M37 20.5h1"/><path stroke="#333333" d="M35 1.5h1M13 3.5h1M42 3.5h1M3 6.5h1M21 6.5h1M13 8.5h1M0 9.5h1M28 9.5h1M48 10.5h2M18 12.5h1M15 14.5h1M35 14.5h1M37 14.5h1M7 15.5h1M44 17.5h1M27 19.5h1"/><path stroke="#444444" d="M12 0.5h1M19 0.5h1M20 1.5h1M32 1.5h1M18 2.5h1M16 3.5h1M18 3.5h1M38 3.5h1M48 3.5h1M4 4.5h1M22 4.5h1M26 5.5h1M47 5.5h1M0 6.5h1M22 7.5h1M0 8.5h1M26 8.5h1M32 8.5h1M41 8.5h1M44 8.5h1M47 8.5h1M31 9.5h1M35 9.5h2M20 10.5h1M32 10.5h1M38 10.5h1M40 10.5h1M42 10.5h1M14 11.5h1M32 11.5h1M8 12.5h1M27 12.5h1M33 12.5h1M46 12.5h1M36 13.5h1M45 13.5h1M49 13.5h1M11 14.5h1M13 14.5h1M46 15.5h1M21 16.5h1M25 16.5h1M27 16.5h1M36 16.5h1M29 17.5h1M34 17.5h1M4 18.5h1M33 18.5h1M32 20.5h1M38 20.5h1M48 20.5h1"/><path stroke="#555555" d="M14 0.5h1M17 0.5h1M31 0.5h1M35 0.5h1M37 0.5h1M3 1.5h1M11 1.5h1M22 1.5h1M24 1.5h1M44 1.5h1M2 2.5h1M11 2.5h1M15 2.5h1M20 2.5h1M43 2.5h1M7 3.5h1M12 3.5h1M28 3.5h1M37 3.5h1M44 3.5h3M2 4.5h1M19 4.5h1M28 4.5h1M27 5.5h1M24 6.5h1M47 6.5h1M49 6.5h1M8 7.5h1M21 7.5h1M28 7.5h2M3 8.5h1M6 8.5h1M10 8.5h1M20 8.5h1M34 8.5h1M37 8.5h1M40 8.5h1M32 9.5h1M47 9.5h1M4 10.5h1M18 10.5h1M24 10.5h1M15 11.5h1M39 11.5h1M0 12.5h1M9 12.5h1M14 12.5h1M19 12.5h1M23 12.5h1M25 12.5h1M43 12.5h1M47 12.5h1M49 12.5h1M19 13.5h1M31 13.5h1M14 14.5h1M28 14.5h1M31 14.5h1M10 15.5h1M18 15.5h1M20 15.5h1M28 15.5h1M18 16.5h1M43 16.5h1M49 16.5h1M2 17.5h1M6 17.5h1M22 17.5h1M32 17.5h1M46 17.5h1M3 18.5h1M9 18.5h1M13 18.5h1M15 18.5h1M28 18.5h1M41 18.5h1M8 19.5h1M20 19.5h1M48 19.5h1M3 20.5h1M7 20.5h1M26 20.5h1"/><path stroke="#666666" d="M1 0.5h1M23 0.5h1M27 0.5h1M45 0.5h1M49 0.5h1M4 1.5h1M6 1.5h1M14 1.5h2M27 1.5h1M33 1.5h1M37 1.5h1M43 1.5h1M14 2.5h1M21 2.5h2M33 2.5h2M6 3.5h1M20 3.5h1M25 3.5h1M36 3.5h1M49 3.5h1M8 4.5h1M15 4.5h1M17 4.5h1M20 4.5h1M43 4.5h2M1 5.5h1M3 5.5h1M5 5.5h1M28 5.5h1M35 5.5h1M42 5.5h2M2 6.5h1M5 6.5h1M10 6.5h1M13 6.5h2M16 6.5h1M25 6.5h1M27 6.5h1M32 6.5h1M42 6.5h1M0 7.5h1M11 7.5h1M47 7.5h1M49 7.5h1M11 8.5h1M22 8.5h1M28 8.5h1M38 8.5h1M5 9.5h1M9 9.5h2M17 9.5h1M40 9.5h1M45 9.5h1M3 10.5h1M16 10.5h1M26 10.5h1M31 10.5h1M46 10.5h1M0 11.5h1M17 11.5h1M20 11.5h1M26 11.5h1M31 11.5h1M36 11.5h1M43 11.5h1M47 11.5h1M2 12.5h1M7 12.5h1M15 12.5h1M22 12.5h1M34 12.5h1M36 12.5h1M41 12.5h2M7 13.5h2M21 13.5h1M26 13.5h1M35 13.5h1M38 13.5h1M16 14.5h1M23 14.5h1M26 14.5h1M27 15.5h1M33 15.5h1M6 16.5h1M11 16.5h1M24 16.5h1M31 16.5h1M39 16.5h1M46 16.5h1M48 16.5h1M8 17.5h2M18 17.5h1M26 17.5h1M37 17.5h1M41 17.5h1M1 18.5h1M20 18.5h1M27 18.5h1M40 18.5h1M16 19.5h2M19 19.5h1M26 19.5h1M32 19.5h1M44 19.5h1M25 20.5h1M27 20.5h1M45 20.5h1"/><path stroke="#777777" d="M7 0.5h1M24 0.5h1M30 0.5h1M48 0.5h1M1 1.5h2M10 1.5h1M21 1.5h1M29 1.5h1M31 1.5h1M41 1.5h2M1 2.5h1M25 2.5h1M30 2.5h1M32 2.5h1M35 2.5h3M41 2.5h1M45 2.5h1M0 3.5h2M3 3.5h1M5 3.5h1M11 3.5h1M17 3.5h1M21 3.5h2M26 3.5h1M47 3.5h1M11 4.5h1M13 4.5h1M18 4.5h1M36 4.5h3M0 5.5h1M15 5.5h1M21 5.5h2M31 5.5h2M45 5.5h1M49 5.5h1M4 6.5h1M9 6.5h1M31 6.5h1M38 6.5h1M40 6.5h1M48 6.5h1M1 7.5h1M6 7.5h1M12 7.5h1M15 7.5h1M33 7.5h1M43 7.5h1M45 7.5h1M2 8.5h1M4 8.5h1M14 8.5h1M16 8.5h1M23 8.5h2M33 8.5h1M43 8.5h1M46 8.5h1M4 9.5h1M6 9.5h2M12 9.5h2M16 9.5h1M21 9.5h1M33 9.5h1M41 9.5h1M49 9.5h1M12 10.5h1M22 10.5h1M35 10.5h1M41 10.5h1M44 10.5h2M6 11.5h1M19 11.5h1M21 11.5h2M24 11.5h2M28 11.5h3M45 11.5h2M48 11.5h1M3 12.5h1M12 12.5h1M20 12.5h1M44 12.5h1M1 13.5h1M5 13.5h1M10 13.5h1M12 13.5h1M17 13.5h1M23 13.5h1M29 13.5h1M43 13.5h1M1 14.5h1M10 14.5h1M12 14.5h1M17 14.5h1M30 14.5h1M36 14.5h1M38 14.5h1M44 14.5h2M1 15.5h1M19 15.5h1M32 15.5h1M36 15.5h1M47 15.5h1M49 15.5h1M4 16.5h1M9 16.5h1M14 16.5h1M17 16.5h1M28 16.5h1M30 16.5h1M35 16.5h1M40 16.5h1M5 17.5h1M7 17.5h1M21 17.5h1M24 17.5h1M28 17.5h1M30 17.5h2M47 17.5h1M0 18.5h1M11 18.5h1M14 18.5h1M18 18.5h1M21 18.5h1M23 18.5h1M25 18.5h1M31 18.5h1M39 18.5h1M42 18.5h3M4 19.5h1M18 19.5h1M22 19.5h2M40 19.5h1M43 19.5h1M46 19.5h2M13 20.5h1M17 20.5h1M29 20.5h2M34 20.5h1M41 20.5h1"/><path stroke="#888888" d="M0 0.5h1M5 0.5h1M8 0.5h1M16 0.5h1M22 0.5h1M25 0.5h1M40 0.5h1M43 0.5h1M12 1.5h1M16 1.5h2M19 1.5h1M30 1.5h1M45 1.5h1M47 1.5h1M5 2.5h3M12 2.5h1M19 2.5h1M23 2.5h1M27 2.5h2M38 2.5h1M48 2.5h1M4 3.5h1M8 3.5h2M15 3.5h1M19 3.5h1M23 3.5h2M30 3.5h1M32 3.5h2M40 3.5h1M0 4.5h2M9 4.5h2M12 4.5h1M23 4.5h1M32 4.5h1M35 4.5h1M10 5.5h1M20 5.5h1M23 5.5h2M29 5.5h1M37 5.5h3M46 5.5h1M48 5.5h1M6 6.5h1M8 6.5h1M12 6.5h1M19 6.5h1M22 6.5h1M33 6.5h1M39 6.5h1M41 6.5h1M44 6.5h1M10 7.5h1M14 7.5h1M16 7.5h1M31 7.5h1M34 7.5h1M42 7.5h1M48 7.5h1M9 8.5h1M21 8.5h1M25 8.5h1M27 8.5h1M48 8.5h1M8 9.5h1M15 9.5h1M22 9.5h2M26 9.5h1M29 9.5h1M39 9.5h1M48 9.5h1M6 10.5h1M14 10.5h1M25 10.5h1M28 10.5h1M30 10.5h1M37 10.5h1M43 10.5h1M1 11.5h1M10 11.5h3M18 11.5h1M33 11.5h1M49 11.5h1M1 12.5h1M6 12.5h1M16 12.5h1M26 12.5h1M28 12.5h1M35 12.5h1M48 12.5h1M9 13.5h1M13 13.5h1M15 13.5h1M20 13.5h1M34 13.5h1M37 13.5h1M47 13.5h1M0 14.5h1M6 14.5h2M24 14.5h1M27 14.5h1M34 14.5h1M39 14.5h1M41 14.5h2M48 14.5h2M3 15.5h1M9 15.5h1M11 15.5h1M23 15.5h4M29 15.5h1M43 15.5h1M45 15.5h1M1 16.5h3M7 16.5h2M26 16.5h1M29 16.5h1M41 16.5h1M19 17.5h1M43 17.5h1M49 17.5h1M2 18.5h1M5 18.5h2M12 18.5h1M16 18.5h1M19 18.5h1M22 18.5h1M32 18.5h1M36 18.5h1M48 18.5h2M0 19.5h1M3 19.5h1M5 19.5h2M11 19.5h1M14 19.5h1M21 19.5h1M25 19.5h1M30 19.5h1M41 19.5h1M0 20.5h2M11 20.5h1M20 20.5h1M22 20.5h1M40 20.5h1M46 20.5h1"/><path stroke="#999999" d="M6 0.5h1M10 0.5h2M13 0.5h1M15 0.5h1M18 0.5h1M28 0.5h2M32 0.5h2M36 0.5h1M38 0.5h1M44 0.5h1M47 0.5h1M7 1.5h1M18 1.5h1M23 1.5h1M28 1.5h1M36 1.5h1M40 1.5h1M0 2.5h1M3 2.5h1M8 2.5h1M13 2.5h1M16 2.5h1M24 2.5h1M39 2.5h1M2 3.5h1M10 3.5h1M14 3.5h1M29 3.5h1M34 3.5h1M41 3.5h1M3 4.5h1M6 4.5h2M14 4.5h1M29 4.5h2M39 4.5h1M46 4.5h1M48 4.5h2M2 5.5h1M7 5.5h1M9 5.5h1M11 5.5h1M14 5.5h1M17 5.5h1M19 5.5h1M36 5.5h1M41 5.5h1M7 6.5h1M11 6.5h1M43 6.5h1M45 6.5h2M5 7.5h1M19 7.5h2M23 7.5h1M25 7.5h1M27 7.5h1M38 7.5h1M46 7.5h1M5 8.5h1M7 8.5h2M15 8.5h1M18 8.5h1M35 8.5h1M42 8.5h1M45 8.5h1M2 9.5h1M11 9.5h1M19 9.5h2M24 9.5h2M27 9.5h1M34 9.5h1M44 9.5h1M0 10.5h1M7 10.5h4M19 10.5h1M34 10.5h1M4 11.5h1M9 11.5h1M37 11.5h2M40 11.5h3M44 11.5h1M11 12.5h1M17 12.5h1M21 12.5h1M30 12.5h2M37 12.5h1M45 12.5h1M0 13.5h1M4 13.5h1M22 13.5h1M25 13.5h1M32 13.5h1M41 13.5h1M46 13.5h1M48 13.5h1M4 14.5h1M9 14.5h1M22 14.5h1M32 14.5h1M47 14.5h1M6 15.5h1M15 15.5h1M35 15.5h1M44 15.5h1M5 16.5h1M13 16.5h1M16 16.5h1M22 16.5h2M33 16.5h1M37 16.5h2M42 16.5h1M44 16.5h2M11 17.5h3M15 17.5h2M20 17.5h1M36 17.5h1M38 17.5h1M42 17.5h1M48 17.5h1M7 18.5h1M29 18.5h2M37 18.5h2M45 18.5h2M7 19.5h1M12 19.5h2M28 19.5h2M31 19.5h1M33 19.5h5M49 19.5h1M4 20.5h1M6 20.5h1M8 20.5h2M12 20.5h1M19 20.5h1M23 20.5h1M36 20.5h1M39 20.5h1M47 20.5h1"/><path stroke="#aaaaaa" d="M3 0.5h1M20 0.5h1M39 0.5h1M0 1.5h1M8 1.5h1M13 1.5h1M25 1.5h1M39 1.5h1M4 2.5h1M9 2.5h2M44 2.5h1M27 3.5h1M31 3.5h1M39 3.5h1M5 4.5h1M16 4.5h1M26 4.5h2M34 4.5h1M42 4.5h1M45 4.5h1M4 5.5h1M6 5.5h1M8 5.5h1M18 5.5h1M30 5.5h1M30 6.5h1M36 6.5h1M2 7.5h1M7 7.5h1M9 7.5h1M17 7.5h2M26 7.5h1M30 7.5h1M32 7.5h1M35 7.5h1M37 7.5h1M39 7.5h1M41 7.5h1M44 7.5h1M17 8.5h1M19 8.5h1M29 8.5h1M1 9.5h1M3 9.5h1M14 9.5h1M37 9.5h2M43 9.5h1M1 10.5h1M11 10.5h1M13 10.5h1M23 10.5h1M29 10.5h1M33 10.5h1M5 11.5h1M8 11.5h1M13 11.5h1M23 11.5h1M27 11.5h1M29 12.5h1M32 12.5h1M40 12.5h1M2 13.5h2M6 13.5h1M11 13.5h1M16 13.5h1M18 13.5h1M24 13.5h1M27 13.5h2M44 13.5h1M5 14.5h1M18 14.5h2M40 14.5h1M43 14.5h1M12 15.5h2M16 15.5h1M21 15.5h1M31 15.5h1M41 15.5h2M0 16.5h1M12 16.5h1M20 16.5h1M25 17.5h1M27 17.5h1M35 17.5h1M45 17.5h1M8 18.5h1M10 18.5h1M35 18.5h1M47 18.5h1M1 19.5h1M15 19.5h1M42 19.5h1M5 20.5h1M10 20.5h1M16 20.5h1M28 20.5h1M31 20.5h1M43 20.5h1"/><path stroke="#bbbbbb" d="M4 0.5h1M26 0.5h1M5 1.5h1M9 1.5h1M26 1.5h1M38 1.5h1M46 1.5h1M48 1.5h2M46 2.5h1M49 2.5h1M24 4.5h2M41 4.5h1M12 5.5h1M16 5.5h1M25 5.5h1M44 5.5h1M1 6.5h1M15 6.5h1M17 6.5h1M26 6.5h1M34 6.5h2M3 7.5h2M39 8.5h1M18 9.5h1M42 9.5h1M2 10.5h1M5 10.5h1M21 10.5h1M39 10.5h1M47 10.5h1M16 11.5h1M10 12.5h1M24 12.5h1M40 13.5h1M2 14.5h2M21 14.5h1M29 14.5h1M46 14.5h1M0 15.5h1M2 15.5h1M4 15.5h1M8 15.5h1M17 15.5h1M34 15.5h1M38 15.5h1M48 15.5h1M32 16.5h1M34 16.5h1M3 17.5h2M17 17.5h1M23 17.5h1M10 19.5h1M38 19.5h1M2 20.5h1M21 20.5h1M44 20.5h1M49 20.5h1"/><path stroke="#cccccc" d="M9 0.5h1M26 2.5h1M29 2.5h1M40 2.5h1M35 3.5h1M43 3.5h1M13 5.5h1M23 6.5h1M24 7.5h1M36 7.5h1M12 8.5h1M31 8.5h1M30 9.5h1M17 10.5h1M2 11.5h1M7 11.5h1M35 11.5h1M4 12.5h2M13 12.5h1M39 13.5h1M42 13.5h1M8 14.5h1M22 15.5h1M30 15.5h1M37 15.5h1M40 15.5h1M47 16.5h1M1 17.5h1M10 17.5h1M14 17.5h1M39 17.5h2M26 18.5h1M9 19.5h1M15 20.5h1M18 20.5h1M33 20.5h1"/><path stroke="#dddddd" d="M2 0.5h1M46 0.5h1M17 2.5h1M34 5.5h1M28 6.5h2M13 7.5h1M20 14.5h1M39 15.5h1M24 18.5h1M34 18.5h1M39 19.5h1"/><path stroke="#eeeeee" d="M41 0.5h1M21 4.5h1M31 4.5h1M47 4.5h1M33 5.5h1M1 8.5h1M30 8.5h1M34 11.5h1M38 12.5h1M0 17.5h1M33 17.5h1M2 19.5h1M24 20.5h1"/><path stroke="#ffffff" d="M21 0.5h1M42 0.5h1M40 5.5h1M20 6.5h1M49 8.5h1M46 9.5h1M15 10.5h1M27 10.5h1M3 11.5h1M39 12.5h1M14 13.5h1M19 16.5h1M17 18.5h1M24 19.5h1M14 20.5h1M35 20.5h1M42 20.5h1"/></g></svg>
<rect x="67.1" y="512.1" width="259.8" height="110.0" fill="#ffa500"/>
<rect x="72.5" y="515.5" width="251.7" height="103.2" fill="#868686"/><svg x="72.5" y="515.5" width="251.7" height="103.2" viewBox="0 0 50 21" preserveAspectRatio="none" shape-rendering="crispEdges"><g stroke-width="1"><path stroke="#000000" d="M13 5.5h1M22 5.5h1M36 5.5h1M47 5.5h1M21 6.5h1M12 8.5h1M20 8.5h1M37 15.5h1M12 16.5h1M40 16.5h1M37 17.5h1M2 18.5h1M32 19.5h1"/><path stroke="#111111" d="M9 1.5h1M43 1.5h1M30 5.5h1M13 7.5h1M15 7.5h1M49 7.5h1"/><path stroke="#222222" d="M2 0.5h1M14 0.5h1M5 2.5h1M8 2.5h1M35 2.5h1M48 2.5h1M29 4.5h1M47 7.5h1M45 9.5h1M42 13.5h1M17 14.5h1M26 20.5h1"/><path stroke="#333333" d="M15 1.5h1M27 1.5h1M39 1.5h1M1 2.5h1M31 2.5h1M46 3.5h1M24 4.5h2M41 4.5h1M16 6.5h1M49 6.5h1M26 9.5h1M36 9.5h2M43 9.5h1M8 12.5h1M32 13.5h1M26 15.5h2M17 18.5h1M1 20.5h1"/><path stroke="#444444" d="M33 0.5h1M33 1.5h1M21 2.5h1M3 3.5h1M16 3.5h1M21 5.5h1M25 5.5h1M35 5.5h1M33 6.5h1M5 7.5h1M18 7.5h1M14 8.5h1M23 8.5h1M47 8.5h1M7 9.5h1M10 9.5h1M19 9.5h1M24 9.5h1M35 9.5h1M36 10.5h1M43 10.5h1M46 10.5h1M49 10.5h1M12 11.5h1M36 11.5h1M42 11.5h1M49 11.5h1M10 12.5h1M29 12.5h1M41 12.5h1M7 13.5h1M12 13.5h1M31 13.5h1M21 14.5h1M24 14.5h1M28 14.5h1M11 15.5h1M30 15.5h1M34 15.5h1M8 18.5h1M25 18.5h1M28 18.5h1M37 18.5h1M19 19.5h1M23 19.5h1M39 19.5h1M44 19.5h1M0 20.5h1M33 20.5h1"/><path stroke="#555555" d="M7 0.5h1M15 0.5h1M17 0.5h1M21 0.5h1M28 0.5h1M47 0.5h1M17 1.5h1M23 1.5h1M13 2.5h1M2 3.5h1M11 3.5h1M17 4.5h1M38 4.5h1M3 5.5h1M5 5.5h1M43 5.5h1M45 5.5h1M8 6.5h1M11 6.5h1M43 6.5h1M47 6.5h1M0 7.5h1M2 7.5h1M7 7.5h1M10 7.5h1M23 7.5h1M28 7.5h1M43 7.5h1M21 8.5h1M26 8.5h1M31 8.5h2M35 8.5h1M4 9.5h1M38 9.5h1M6 10.5h1M12 10.5h1M27 10.5h1M41 10.5h1M15 11.5h1M32 11.5h1M0 12.5h3M30 13.5h1M12 14.5h1M34 14.5h1M36 14.5h1M38 14.5h1M46 14.5h1M2 15.5h1M6 15.5h1M22 15.5h1M11 16.5h1M18 16.5h1M28 16.5h1M46 16.5h1M7 17.5h3M11 17.5h1M16 17.5h1M26 17.5h1M33 17.5h1M38 17.5h1M15 18.5h1M43 18.5h1M9 19.5h1M14 19.5h1M26 19.5h1M45 19.5h1M2 20.5h2M7 20.5h1M9 20.5h1M14 20.5h1M47 20.5h1"/><path stroke="#666666" d="M1 0.5h1M34 0.5h1M48 0.5h1M5 1.5h1M11 1.5h1M16 1.5h1M26 1.5h1M31 1.5h2M23 2.5h1M34 2.5h1M43 2.5h1M46 2.5h2M1 3.5h1M13 3.5h1M22 3.5h1M44 3.5h1M27 4.5h1M36 4.5h1M44 4.5h1M1 5.5h1M4 5.5h1M6 5.5h3M17 5.5h2M33 5.5h2M3 6.5h1M4 7.5h1M16 7.5h1M19 7.5h1M22 7.5h1M39 7.5h1M46 7.5h1M48 7.5h1M2 8.5h1M9 8.5h1M18 8.5h1M33 8.5h1M36 8.5h1M2 9.5h1M9 9.5h1M11 9.5h1M20 9.5h2M25 9.5h1M31 9.5h1M47 9.5h1M1 10.5h1M29 10.5h1M47 10.5h1M0 11.5h1M13 11.5h1M23 11.5h1M29 11.5h1M40 11.5h1M47 11.5h2M12 12.5h1M27 12.5h1M31 12.5h1M42 12.5h1M49 12.5h1M14 13.5h1M23 13.5h2M29 13.5h1M33 13.5h1M35 13.5h1M38 13.5h3M43 13.5h1M47 13.5h1M0 14.5h1M7 14.5h1M15 14.5h1M25 14.5h1M27 14.5h1M32 14.5h1M44 14.5h1M9 15.5h1M12 15.5h1M21 15.5h1M24 15.5h1M32 15.5h1M35 15.5h1M39 15.5h1M41 15.5h1M48 15.5h1M8 16.5h1M14 16.5h1M17 16.5h1M21 16.5h1M31 16.5h1M35 16.5h1M41 16.5h1M1 17.5h1M5 17.5h1M10 17.5h1M23 17.5h1M29 17.5h1M35 17.5h1M47 17.5h1M3 18.5h1M21 18.5h1M23 18.5h1M32 18.5h1M34 18.5h3M48 18.5h1M13 19.5h1M24 19.5h1M34 19.5h1M46 19.5h1M4 20.5h1M8 20.5h1M20 20.5h2M23 20.5h1M34 20.5h1M42 20.5h1M44 20.5h1"/><path stroke="#777777" d="M5 0.5h2M10 0.5h1M13 0.5h1M22 0.5h2M26 0.5h1M36 0.5h1M42 0.5h1M45 0.5h1M49 0.5h1M4 1.5h1M19 1.5h1M22 1.5h1M24 1.5h1M29 1.5h1M38 1.5h1M40 1.5h1M42 1.5h1M48 1.5h1M0 2.5h1M2 2.5h1M9 2.5h1M14 2.5h1M22 2.5h1M27 2.5h1M33 2.5h1M36 2.5h1M39 2.5h1M42 2.5h1M44 2.5h1M4 3.5h3M10 3.5h1M14 3.5h1M25 3.5h1M35 3.5h1M39 3.5h1M48 3.5h1M3 4.5h1M7 4.5h1M10 4.5h1M15 4.5h1M20 4.5h1M35 4.5h1M48 4.5h1M12 5.5h1M26 5.5h1M31 5.5h1M40 5.5h1M48 5.5h1M0 6.5h1M4 6.5h1M6 6.5h1M23 6.5h2M35 6.5h2M39 6.5h1M1 7.5h1M8 7.5h2M20 7.5h1M29 7.5h1M34 7.5h1M0 8.5h2M6 8.5h1M29 8.5h1M34 8.5h1M43 8.5h1M15 9.5h1M17 9.5h1M22 9.5h1M34 9.5h1M49 9.5h1M0 10.5h1M11 10.5h1M13 10.5h1M16 10.5h1M34 10.5h1M37 10.5h1M45 10.5h1M8 11.5h2M20 11.5h2M26 11.5h2M31 11.5h1M41 11.5h1M9 12.5h1M32 12.5h1M35 12.5h2M43 12.5h1M46 12.5h3M4 13.5h1M8 13.5h1M11 13.5h1M22 13.5h1M28 13.5h1M48 13.5h1M2 14.5h1M8 14.5h1M16 14.5h1M20 14.5h1M22 14.5h1M29 14.5h2M49 14.5h1M4 15.5h1M18 15.5h2M36 15.5h1M45 15.5h3M0 16.5h1M2 16.5h2M15 16.5h1M19 16.5h2M23 16.5h1M33 16.5h1M36 16.5h1M0 17.5h1M4 17.5h1M20 17.5h1M31 17.5h1M42 17.5h1M49 17.5h1M0 18.5h1M11 18.5h1M18 18.5h1M20 18.5h1M39 18.5h2M1 19.5h1M4 19.5h1M17 19.5h1M28 19.5h1M30 19.5h2M33 19.5h1M49 19.5h1M12 20.5h1M17 20.5h1M28 20.5h1M36 20.5h1M48 20.5h1"/><path stroke="#888888" d="M3 0.5h1M9 0.5h1M25 0.5h1M29 0.5h1M31 0.5h2M37 0.5h1M39 0.5h1M43 0.5h2M1 1.5h2M6 1.5h2M10 1.5h1M14 1.5h1M20 1.5h1M34 1.5h1M41 1.5h1M44 1.5h1M47 1.5h1M3 2.5h1M7 2.5h1M10 2.5h2M16 2.5h1M19 2.5h1M24 2.5h1M38 2.5h1M49 2.5h1M0 3.5h1M18 3.5h1M27 3.5h1M30 3.5h4M43 3.5h1M0 4.5h1M2 4.5h1M4 4.5h2M8 4.5h1M23 4.5h1M31 4.5h1M34 4.5h1M37 4.5h1M10 5.5h1M16 5.5h1M23 5.5h2M42 5.5h1M49 5.5h1M9 6.5h1M14 6.5h1M18 6.5h1M20 6.5h1M25 6.5h1M27 6.5h1M37 6.5h1M41 6.5h2M3 7.5h1M11 7.5h2M30 7.5h2M33 7.5h1M40 7.5h3M44 7.5h1M4 8.5h2M7 8.5h1M11 8.5h1M17 8.5h1M28 8.5h1M39 8.5h1M41 8.5h1M45 8.5h2M48 8.5h1M5 9.5h1M12 9.5h1M28 9.5h2M42 9.5h1M44 9.5h1M5 10.5h1M9 10.5h1M19 10.5h2M22 10.5h1M40 10.5h1M11 11.5h1M16 11.5h1M24 11.5h1M35 11.5h1M11 12.5h1M30 12.5h1M33 12.5h2M37 12.5h1M5 13.5h1M10 13.5h1M18 13.5h1M20 13.5h1M26 13.5h1M36 13.5h2M41 13.5h1M44 13.5h2M6 14.5h1M10 14.5h1M13 14.5h1M18 14.5h1M23 14.5h1M31 14.5h1M35 14.5h1M39 14.5h1M41 14.5h1M43 14.5h1M10 15.5h1M16 15.5h1M23 15.5h1M29 15.5h1M42 15.5h1M4 16.5h1M6 16.5h1M24 16.5h4M32 16.5h1M34 16.5h1M38 16.5h2M43 16.5h1M45 16.5h1M48 16.5h1M6 17.5h1M18 17.5h2M25 17.5h1M27 17.5h1M30 17.5h1M34 17.5h1M41 17.5h1M5 18.5h1M10 18.5h1M13 18.5h2M19 18.5h1M22 18.5h1M26 18.5h1M47 18.5h1M49 18.5h1M3 19.5h1M5 19.5h1M15 19.5h2M20 19.5h1M22 19.5h1M25 19.5h1M42 19.5h2M13 20.5h1M18 20.5h1M27 20.5h1M37 20.5h1M40 20.5h2M43 20.5h1"/><path stroke="#999999" d="M4 0.5h1M19 0.5h1M24 0.5h1M38 0.5h1M8 1.5h1M18 1.5h1M21 1.5h1M30 1.5h1M35 1.5h1M37 1.5h1M46 1.5h1M4 2.5h1M6 2.5h1M17 2.5h2M25 2.5h1M30 2.5h1M40 2.5h1M12 3.5h1M17 3.5h1M20 3.5h2M36 3.5h1M40 3.5h1M49 3.5h1M6 4.5h1M9 4.5h1M12 4.5h2M18 4.5h1M26 4.5h1M28 4.5h1M30 4.5h1M40 4.5h1M43 4.5h1M45 4.5h1M47 4.5h1M49 4.5h1M2 5.5h1M15 5.5h1M19 5.5h1M29 5.5h1M39 5.5h1M2 6.5h1M10 6.5h1M15 6.5h1M17 6.5h1M19 6.5h1M28 6.5h1M44 6.5h2M48 6.5h1M14 7.5h1M21 7.5h1M24 7.5h1M26 7.5h1M8 8.5h1M10 8.5h1M13 8.5h1M22 8.5h1M38 8.5h1M40 8.5h1M44 8.5h1M1 9.5h1M3 9.5h1M8 9.5h1M13 9.5h1M16 9.5h1M18 9.5h1M23 9.5h1M27 9.5h1M30 9.5h1M41 9.5h1M2 10.5h3M15 10.5h1M18 10.5h1M25 10.5h2M31 10.5h1M35 10.5h1M3 11.5h1M5 11.5h3M18 11.5h2M43 11.5h1M45 11.5h1M5 12.5h1M7 12.5h1M13 12.5h2M16 12.5h2M20 12.5h1M23 12.5h2M28 12.5h1M44 12.5h1M2 13.5h2M9 13.5h1M15 13.5h2M21 13.5h1M25 13.5h1M27 13.5h1M34 13.5h1M1 14.5h1M5 14.5h1M9 14.5h1M11 14.5h1M19 14.5h1M26 14.5h1M37 14.5h1M40 14.5h1M42 14.5h1M48 14.5h1M1 15.5h1M13 15.5h3M17 15.5h1M20 15.5h1M33 15.5h1M49 15.5h1M5 16.5h1M7 16.5h1M10 16.5h1M30 16.5h1M42 16.5h1M2 17.5h1M12 17.5h1M14 17.5h2M21 17.5h1M24 17.5h1M32 17.5h1M39 17.5h1M43 17.5h1M6 18.5h1M9 18.5h1M12 18.5h1M16 18.5h1M24 18.5h1M27 18.5h1M29 18.5h1M31 18.5h1M38 18.5h1M44 18.5h3M6 19.5h1M8 19.5h1M10 19.5h3M27 19.5h1M48 19.5h1M10 20.5h2M15 20.5h1M24 20.5h1M30 20.5h3M35 20.5h1M38 20.5h1"/><path stroke="#aaaaaa" d="M8 0.5h1M18 0.5h1M35 0.5h1M40 0.5h2M46 0.5h1M0 1.5h1M12 1.5h2M12 2.5h1M15 2.5h1M26 2.5h1M28 2.5h1M32 2.5h1M37 2.5h1M41 2.5h1M8 3.5h1M15 3.5h1M19 3.5h1M23 3.5h2M34 3.5h1M37 3.5h1M42 3.5h1M45 3.5h1M14 4.5h1M16 4.5h1M22 4.5h1M32 4.5h1M0 5.5h1M28 5.5h1M37 5.5h2M44 5.5h1M46 5.5h1M7 6.5h1M13 6.5h1M26 6.5h1M32 6.5h1M46 6.5h1M32 7.5h1M38 7.5h1M45 7.5h1M3 8.5h1M16 8.5h1M30 8.5h1M37 8.5h1M33 9.5h1M39 9.5h2M48 9.5h1M10 10.5h1M21 10.5h1M23 10.5h1M30 10.5h1M32 10.5h1M42 10.5h1M44 10.5h1M48 10.5h1M1 11.5h2M4 11.5h1M10 11.5h1M14 11.5h1M22 11.5h1M30 11.5h1M33 11.5h1M39 11.5h1M46 11.5h1M4 12.5h1M15 12.5h1M18 12.5h1M21 12.5h1M26 12.5h1M38 12.5h1M40 12.5h1M0 13.5h1M6 13.5h1M46 13.5h1M3 14.5h1M33 14.5h1M45 14.5h1M3 15.5h1M7 15.5h2M28 15.5h1M31 15.5h1M40 15.5h1M44 15.5h1M1 16.5h1M22 16.5h1M29 16.5h1M37 16.5h1M49 16.5h1M13 17.5h1M28 17.5h1M36 17.5h1M45 17.5h2M48 17.5h1M1 18.5h1M41 18.5h1M0 19.5h1M29 19.5h1M37 19.5h1M40 19.5h1M16 20.5h1M19 20.5h1M25 20.5h1M29 20.5h1M39 20.5h1"/><path stroke="#bbbbbb" d="M16 0.5h1M27 0.5h1M30 0.5h1M3 1.5h1M49 1.5h1M45 2.5h1M29 3.5h1M38 3.5h1M47 3.5h1M1 4.5h1M19 4.5h1M33 4.5h1M9 5.5h1M20 5.5h1M27 5.5h1M32 5.5h1M1 6.5h1M5 6.5h1M12 6.5h1M30 6.5h1M40 6.5h1M6 7.5h1M17 7.5h1M37 7.5h1M15 8.5h1M49 8.5h1M6 9.5h1M32 9.5h1M8 10.5h1M17 10.5h1M39 10.5h1M25 11.5h1M28 11.5h1M37 11.5h1M44 11.5h1M6 12.5h1M1 13.5h1M17 13.5h1M19 13.5h1M47 14.5h1M25 15.5h1M38 15.5h1M13 16.5h1M47 16.5h1M17 17.5h1M4 18.5h1M42 18.5h1M2 19.5h1M35 19.5h2M41 19.5h1M47 19.5h1M6 20.5h1M45 20.5h2"/><path stroke="#cccccc" d="M11 0.5h2M28 1.5h1M45 1.5h1M20 2.5h1M11 4.5h1M21 4.5h1M39 4.5h1M41 5.5h1M31 6.5h1M38 6.5h1M25 7.5h1M27 7.5h1M35 7.5h2M24 8.5h2M42 8.5h1M0 9.5h1M14 10.5h1M33 10.5h1M38 11.5h1M19 12.5h1M13 13.5h1M49 13.5h1M0 15.5h1M9 16.5h1M44 16.5h1M3 17.5h1M40 17.5h1M33 18.5h1M18 19.5h1M21 19.5h1"/><path stroke="#dddddd" d="M0 0.5h1M20 0.5h1M25 1.5h1M41 3.5h1M46 4.5h1M14 5.5h1M29 6.5h1M19 8.5h1M27 8.5h1M28 10.5h1M38 10.5h1M17 11.5h1M3 12.5h1M22 12.5h1M45 12.5h1M14 14.5h1M5 15.5h1M43 15.5h1M16 16.5h1M7 18.5h1M30 18.5h1M7 19.5h1M38 19.5h1M5 20.5h1M49 20.5h1"/><path stroke="#eeeeee" d="M7 3.5h1M9 3.5h1M26 3.5h1M28 3.5h1M11 5.5h1M34 6.5h1M24 10.5h1M34 11.5h1M25 12.5h1M22 17.5h1M22 20.5h1"/><path stroke="#ffffff" d="M36 1.5h1M29 2.5h1M42 4.5h1M22 6.5h1M14 9.5h1M46 9.5h1M7 10.5h1M39 12.5h1M4 14.5h1M44 17.5h1"/></g></svg>
<rect x="67.1" y="622.1" width="259.8" height="110.8" fill="#ff0000"/>
<rect x="72.5" y="625.5" width="251.7" height="103.99999999999996" fill="#868686"/><svg x="72.5" y="625.5" width="251.7" height="103.99999999999996" viewBox="0 0 50 21" preserveAspectRatio="none" shape-rendering="crispEdges"><g stroke-width="1"><path stroke="#000000" d="M20 3.5h1M13 6.5h1M37 12.5h1M39 14.5h1M38 16.5h1"/><path stroke="#111111" d="M34 6.5h1M5 9.5h1M43 14.5h1M2 16.5h1M23 17.5h1M43 19.5h1M12 20.5h1"/><path stroke="#222222" d="M46 0.5h1M29 2.5h1M47 3.5h1M21 4.5h1M14 5.5h1M1 6.5h1M42 7.5h1M25 9.5h1M27 10.5h1M41 11.5h1M8 12.5h1M29 12.5h1M46 19.5h1"/><path stroke="#333333" d="M44 0.5h1M1 1.5h1M20 1.5h1M22 1.5h1M32 2.5h1M4 3.5h1M8 3.5h1M43 4.5h1M9 5.5h1M33 5.5h1M42 5.5h1M19 7.5h1M26 8.5h1M4 9.5h1M18 9.5h1M21 9.5h1M45 12.5h1M47 13.5h1M11 14.5h1M13 14.5h1M11 15.5h1M13 17.5h1M29 17.5h1M17 18.5h1M37 18.5h1M49 19.5h1M3 20.5h1M29 20.5h1"/><path stroke="#444444" d="M20 0.5h1M24 0.5h1M30 0.5h1M42 0.5h1M16 1.5h1M26 1.5h1M35 1.5h1M24 2.5h1M34 2.5h1M46 2.5h1M42 3.5h2M12 4.5h1M20 4.5h1M27 4.5h1M2 5.5h1M21 5.5h1M41 5.5h1M43 5.5h1M19 6.5h1M25 6.5h1M18 8.5h1M6 9.5h1M9 9.5h1M15 9.5h1M26 9.5h1M40 9.5h1M44 10.5h1M34 12.5h1M41 12.5h1M8 13.5h1M29 13.5h1M25 14.5h1M10 15.5h1M23 15.5h2M4 16.5h1M13 16.5h1M20 16.5h1M33 16.5h1M44 16.5h1M46 16.5h1M48 16.5h1M18 17.5h1M27 17.5h1M25 18.5h1M46 18.5h1M49 18.5h1M7 19.5h1M6 20.5h1"/><path stroke="#555555" d="M13 0.5h1M15 0.5h2M25 0.5h2M36 0.5h1M10 1.5h1M31 1.5h1M33 1.5h1M39 1.5h1M45 1.5h1M1 2.5h1M12 2.5h1M25 2.5h1M33 2.5h1M13 3.5h1M37 3.5h2M45 3.5h1M11 4.5h1M22 4.5h1M31 4.5h1M15 5.5h1M17 5.5h1M37 5.5h1M5 6.5h1M10 6.5h2M16 6.5h1M31 6.5h1M33 6.5h1M42 6.5h1M11 7.5h1M14 7.5h1M32 7.5h1M44 7.5h1M48 7.5h1M4 8.5h1M13 8.5h2M16 8.5h1M19 8.5h2M32 8.5h1M3 9.5h1M8 9.5h1M35 9.5h1M13 10.5h1M20 10.5h2M28 10.5h1M6 11.5h1M15 11.5h1M17 11.5h1M19 11.5h1M27 11.5h1M42 11.5h1M49 11.5h1M13 12.5h3M20 12.5h1M47 12.5h1M14 13.5h1M21 13.5h1M38 13.5h1M40 13.5h1M12 14.5h1M17 14.5h1M21 14.5h1M16 15.5h1M20 15.5h2M47 15.5h1M5 16.5h1M31 16.5h1M34 16.5h1M47 17.5h1M2 19.5h1M14 19.5h1M25 19.5h1M33 19.5h1M5 20.5h1"/><path stroke="#666666" d="M10 0.5h1M5 1.5h1M11 1.5h1M13 1.5h1M32 1.5h1M37 1.5h1M48 1.5h1M4 2.5h1M11 2.5h1M17 2.5h1M21 2.5h1M28 2.5h1M1 3.5h1M9 3.5h3M21 3.5h2M24 3.5h2M31 3.5h1M40 3.5h1M9 4.5h1M19 4.5h1M26 4.5h1M41 4.5h1M12 5.5h1M16 5.5h1M30 5.5h1M39 5.5h1M3 6.5h1M15 6.5h1M23 6.5h1M36 6.5h1M38 6.5h1M12 7.5h1M16 7.5h1M21 7.5h1M24 7.5h1M28 7.5h2M41 7.5h1M0 8.5h1M5 8.5h2M22 8.5h2M1 9.5h1M11 9.5h1M14 9.5h1M34 9.5h1M0 10.5h2M5 10.5h1M10 10.5h1M33 10.5h1M36 10.5h1M43 10.5h1M45 10.5h1M49 10.5h1M23 11.5h1M30 11.5h1M39 11.5h1M5 12.5h1M43 12.5h2M46 12.5h1M15 13.5h1M22 13.5h2M28 13.5h1M7 14.5h1M16 14.5h1M18 14.5h1M23 14.5h1M13 15.5h1M19 15.5h1M32 15.5h1M45 15.5h1M6 16.5h1M8 16.5h1M18 16.5h1M6 17.5h1M19 17.5h1M41 17.5h2M48 17.5h1M10 18.5h1M45 18.5h1M48 18.5h1M4 19.5h1M18 19.5h1M22 19.5h1M38 19.5h1M40 19.5h1M27 20.5h1M30 20.5h1M43 20.5h2M47 20.5h1"/><path stroke="#777777" d="M3 0.5h1M14 0.5h1M17 0.5h1M22 0.5h2M28 0.5h1M34 0.5h1M43 0.5h1M48 0.5h1M4 1.5h1M7 1.5h1M15 1.5h1M44 1.5h1M49 1.5h1M8 2.5h1M10 2.5h1M14 2.5h1M18 2.5h1M20 2.5h1M30 2.5h1M37 2.5h1M41 2.5h1M45 2.5h1M47 2.5h1M6 3.5h1M14 3.5h2M18 3.5h2M27 3.5h1M39 3.5h1M46 3.5h1M48 3.5h2M4 4.5h1M7 4.5h2M17 4.5h2M25 4.5h1M38 4.5h1M40 4.5h1M45 4.5h1M47 4.5h2M11 5.5h1M19 5.5h2M22 5.5h1M24 5.5h2M28 5.5h2M36 5.5h1M47 5.5h2M2 6.5h1M7 6.5h1M26 6.5h3M43 6.5h1M3 7.5h1M7 7.5h1M18 7.5h1M23 7.5h1M30 7.5h1M49 7.5h1M1 8.5h2M7 8.5h1M27 8.5h1M29 8.5h1M12 9.5h1M24 9.5h1M37 9.5h1M41 9.5h1M43 9.5h1M45 9.5h1M4 10.5h1M7 10.5h1M14 10.5h2M30 10.5h1M35 10.5h1M40 10.5h1M2 11.5h1M9 11.5h1M34 11.5h1M40 11.5h1M44 11.5h1M47 11.5h1M4 12.5h1M6 12.5h1M9 12.5h1M16 12.5h1M22 12.5h1M31 12.5h2M35 12.5h1M4 13.5h2M24 13.5h1M32 13.5h1M43 13.5h1M22 14.5h1M29 14.5h1M31 14.5h1M34 14.5h1M45 14.5h1M48 14.5h2M14 15.5h1M30 15.5h1M38 15.5h1M46 15.5h1M48 15.5h1M0 16.5h1M9 16.5h1M19 16.5h1M29 16.5h1M35 16.5h1M45 16.5h1M49 16.5h1M2 17.5h1M11 17.5h1M15 17.5h2M22 17.5h1M32 17.5h1M37 17.5h2M44 17.5h1M49 17.5h1M5 18.5h1M7 18.5h1M9 18.5h1M24 18.5h1M35 18.5h1M38 18.5h1M41 18.5h1M1 19.5h1M6 19.5h1M11 19.5h1M35 19.5h1M48 19.5h1M2 20.5h1M14 20.5h1M17 20.5h1M19 20.5h1M26 20.5h1M31 20.5h1M41 20.5h1M49 20.5h1"/><path stroke="#888888" d="M2 0.5h1M7 0.5h1M12 0.5h1M18 0.5h1M35 0.5h1M0 1.5h1M2 1.5h1M12 1.5h1M18 1.5h1M34 1.5h1M38 1.5h1M40 1.5h1M42 1.5h1M46 1.5h1M5 2.5h1M7 2.5h1M19 2.5h1M22 2.5h2M38 2.5h1M5 3.5h1M7 3.5h1M16 3.5h1M26 3.5h1M34 3.5h2M44 3.5h1M6 4.5h1M10 4.5h1M13 4.5h1M15 4.5h1M36 4.5h1M44 4.5h1M0 5.5h1M4 5.5h1M6 5.5h1M13 5.5h1M31 5.5h2M46 5.5h1M4 6.5h1M8 6.5h1M12 6.5h1M37 6.5h1M40 6.5h1M44 6.5h1M46 6.5h3M1 7.5h2M5 7.5h1M9 7.5h1M26 7.5h1M34 7.5h1M45 7.5h1M47 7.5h1M3 8.5h1M9 8.5h2M12 8.5h1M33 8.5h1M37 8.5h3M43 8.5h1M45 8.5h1M48 8.5h2M23 9.5h1M27 9.5h1M29 9.5h1M36 9.5h1M39 9.5h1M48 9.5h2M2 10.5h1M17 10.5h2M23 10.5h1M25 10.5h2M42 10.5h1M48 10.5h1M0 11.5h1M7 11.5h1M12 11.5h2M20 11.5h2M29 11.5h1M31 11.5h1M37 11.5h1M48 11.5h1M2 12.5h1M21 12.5h1M23 12.5h1M3 13.5h1M6 13.5h1M9 13.5h1M17 13.5h1M33 13.5h1M44 13.5h1M46 13.5h1M0 14.5h2M10 14.5h1M15 14.5h1M19 14.5h1M36 14.5h2M40 14.5h2M44 14.5h1M4 15.5h1M8 15.5h1M18 15.5h1M22 15.5h1M26 15.5h1M34 15.5h1M39 15.5h1M42 15.5h2M1 16.5h1M21 16.5h1M28 16.5h1M32 16.5h1M37 16.5h1M39 16.5h1M42 16.5h1M7 17.5h2M17 17.5h1M21 17.5h1M25 17.5h1M28 17.5h1M43 17.5h1M46 17.5h1M0 18.5h1M3 18.5h1M11 18.5h1M16 18.5h1M19 18.5h1M21 18.5h1M26 18.5h2M33 18.5h1M5 19.5h1M8 19.5h2M13 19.5h1M15 19.5h1M17 19.5h1M19 19.5h1M23 19.5h1M8 20.5h1M16 20.5h1M18 20.5h1M20 20.5h1M23 20.5h1M25 20.5h1M28 20.5h1M36 20.5h2M40 20.5h1"/><path stroke="#999999" d="M0 0.5h1M9 0.5h1M27 0.5h1M31 0.5h1M37 0.5h2M6 1.5h1M8 1.5h1M14 1.5h1M19 1.5h1M23 1.5h2M27 1.5h1M29 1.5h1M36 1.5h1M0 2.5h1M9 2.5h1M13 2.5h1M16 2.5h1M27 2.5h1M31 2.5h1M39 2.5h1M44 2.5h1M2 3.5h2M17 3.5h1M28 3.5h1M30 3.5h1M33 3.5h1M36 3.5h1M1 4.5h1M5 4.5h1M24 4.5h1M28 4.5h2M35 4.5h1M39 4.5h1M46 4.5h1M10 5.5h1M26 5.5h1M38 5.5h1M45 5.5h1M49 5.5h1M0 6.5h1M14 6.5h1M20 6.5h2M29 6.5h2M35 6.5h1M45 6.5h1M4 7.5h1M6 7.5h1M8 7.5h1M10 7.5h1M13 7.5h1M20 7.5h1M25 7.5h1M33 7.5h1M39 7.5h1M43 7.5h1M46 7.5h1M24 8.5h2M31 8.5h1M35 8.5h2M40 8.5h1M0 9.5h1M7 9.5h1M16 9.5h1M19 9.5h2M22 9.5h1M28 9.5h1M42 9.5h1M46 9.5h1M3 10.5h1M8 10.5h1M16 10.5h1M31 10.5h2M38 10.5h1M4 11.5h2M10 11.5h1M16 11.5h1M25 11.5h2M33 11.5h1M43 11.5h1M46 11.5h1M0 12.5h1M3 12.5h1M17 12.5h1M26 12.5h2M30 12.5h1M38 12.5h1M48 12.5h1M1 13.5h2M7 13.5h1M11 13.5h2M16 13.5h1M18 13.5h2M37 13.5h1M39 13.5h1M41 13.5h1M2 14.5h2M5 14.5h1M8 14.5h2M26 14.5h1M30 14.5h1M32 14.5h2M35 14.5h1M47 14.5h1M1 15.5h1M3 15.5h1M5 15.5h1M7 15.5h1M9 15.5h1M25 15.5h1M28 15.5h1M37 15.5h1M41 15.5h1M3 16.5h1M12 16.5h1M14 16.5h1M16 16.5h2M23 16.5h2M26 16.5h2M36 16.5h1M40 16.5h1M43 16.5h1M1 17.5h1M10 17.5h1M20 17.5h1M35 17.5h2M40 17.5h1M2 18.5h1M4 18.5h1M8 18.5h1M13 18.5h1M15 18.5h1M18 18.5h1M22 18.5h1M29 18.5h1M31 18.5h1M44 18.5h1M3 19.5h1M16 19.5h1M30 19.5h1M36 19.5h1M42 19.5h1M44 19.5h2M47 19.5h1M7 20.5h1M21 20.5h1M24 20.5h1M32 20.5h2M38 20.5h1M42 20.5h1M45 20.5h1M48 20.5h1"/><path stroke="#aaaaaa" d="M1 0.5h1M4 0.5h3M19 0.5h1M29 0.5h1M39 0.5h1M45 0.5h1M47 0.5h1M49 0.5h1M3 1.5h1M9 1.5h1M21 1.5h1M30 1.5h1M41 1.5h1M43 1.5h1M47 1.5h1M3 2.5h1M35 2.5h1M40 2.5h1M43 2.5h1M48 2.5h2M23 3.5h1M2 4.5h1M14 4.5h1M23 4.5h1M33 4.5h1M37 4.5h1M42 4.5h1M49 4.5h1M3 5.5h1M8 5.5h1M18 5.5h1M27 5.5h1M40 5.5h1M6 6.5h1M18 6.5h1M15 7.5h1M17 7.5h1M27 7.5h1M31 7.5h1M36 7.5h2M40 7.5h1M8 8.5h1M11 8.5h1M21 8.5h1M28 8.5h1M30 8.5h1M41 8.5h2M46 8.5h1M32 9.5h1M11 10.5h2M19 10.5h1M29 10.5h1M1 11.5h1M3 11.5h1M8 11.5h1M11 11.5h1M28 11.5h1M35 11.5h2M38 11.5h1M45 11.5h1M1 12.5h1M7 12.5h1M10 12.5h1M24 12.5h2M28 12.5h1M36 12.5h1M20 13.5h1M25 13.5h3M35 13.5h1M48 13.5h2M6 14.5h1M38 14.5h1M42 14.5h1M0 15.5h1M2 15.5h1M12 15.5h1M29 15.5h1M33 15.5h1M44 15.5h1M10 16.5h1M15 16.5h1M25 16.5h1M47 16.5h1M4 17.5h1M14 17.5h1M34 17.5h1M12 18.5h1M14 18.5h1M23 18.5h1M28 18.5h1M32 18.5h1M34 18.5h1M39 18.5h1M42 18.5h2M47 18.5h1M0 19.5h1M10 19.5h1M12 19.5h1M20 19.5h2M28 19.5h2M34 19.5h1M37 19.5h1M39 19.5h1M41 19.5h1M1 20.5h1M9 20.5h2M13 20.5h1M15 20.5h1M22 20.5h1M34 20.5h1M46 20.5h1"/><path stroke="#bbbbbb" d="M8 0.5h1M32 0.5h1M40 0.5h1M28 1.5h1M26 2.5h1M36 2.5h1M0 3.5h1M29 3.5h1M32 3.5h1M41 3.5h1M3 4.5h1M30 4.5h1M34 4.5h1M5 5.5h1M7 5.5h1M17 6.5h1M32 6.5h1M41 6.5h1M35 7.5h1M44 8.5h1M47 8.5h1M17 9.5h1M31 9.5h1M47 9.5h1M6 10.5h1M24 11.5h1M11 12.5h1M18 12.5h1M0 13.5h1M10 13.5h1M13 13.5h1M30 13.5h1M34 13.5h1M17 15.5h1M49 15.5h1M22 16.5h1M30 16.5h1M0 17.5h1M3 17.5h1M12 17.5h1M30 17.5h2M39 17.5h1M45 17.5h1M6 18.5h1M30 18.5h1M36 18.5h1M40 18.5h1M32 19.5h1M0 20.5h1M35 20.5h1"/><path stroke="#cccccc" d="M11 0.5h1M17 1.5h1M25 1.5h1M15 2.5h1M42 2.5h1M0 4.5h1M32 4.5h1M34 5.5h2M39 6.5h1M0 7.5h1M15 8.5h1M17 8.5h1M2 9.5h1M10 9.5h1M13 9.5h1M30 9.5h1M22 10.5h1M24 10.5h1M34 10.5h1M37 10.5h1M41 10.5h1M18 11.5h1M22 11.5h1M32 11.5h1M12 12.5h1M20 14.5h1M46 14.5h1M36 15.5h1M40 15.5h1M7 16.5h1M41 16.5h1M24 17.5h1M26 17.5h1M33 17.5h1M20 18.5h1M24 19.5h1M26 19.5h1"/><path stroke="#dddddd" d="M21 0.5h1M33 0.5h1M2 2.5h1M12 3.5h1M1 5.5h1M23 5.5h1M24 6.5h1M22 7.5h1M34 8.5h1M44 9.5h1M9 10.5h1M47 10.5h1M14 11.5h1M39 12.5h1M42 12.5h1M49 12.5h1M42 13.5h1M45 13.5h1M4 14.5h1M14 14.5h1M28 14.5h1M27 15.5h1M35 15.5h1M11 16.5h1M31 19.5h1M11 20.5h1"/><path stroke="#eeeeee" d="M41 0.5h1M16 4.5h1M44 5.5h1M33 9.5h1M38 9.5h1M31 13.5h1M24 14.5h1M6 15.5h1M31 15.5h1M5 17.5h1M9 17.5h1M1 18.5h1M4 20.5h1M39 20.5h1"/><path stroke="#ffffff" d="M6 2.5h1M9 6.5h1M22 6.5h1M49 6.5h1M38 7.5h1M39 10.5h1M46 10.5h1M19 12.5h1M33 12.5h1M40 12.5h1M36 13.5h1M27 14.5h1M15 15.5h1M27 19.5h1"/></g></svg>
<rect x="340.6" y="159.8" width="275.4" height="274.4" fill="#ff0000"/>
<rect x="345.2" y="164.2" width="265.2" height="265.4" fill="#b4b4b4"/><svg x="345.2" y="164.2" width="265.2" height="265.4" viewBox="0 0 50 50" preserveAspectRatio="none" shape-rendering="crispEdges"><g stroke-width="1"><path stroke="#000000" d="M45 3.5h1M11 21.5h1M34 39.5h6M32 40.5h10M31 41.5h12M31 42.5h13M30 43.5h14M30 44.5h14M29 45.5h16M29 46.5h16M29 47.5h15M30 48.5h14M30 49.5h14"/><path stroke="#111111" d="M4 26.5h1M37 38.5h2M32 39.5h2M40 39.5h1M31 40.5h1M30 42.5h1M29 44.5h1M44 44.5h1M44 47.5h1M29 48.5h1M44 48.5h1M29 49.5h1M47 49.5h1"/><path stroke="#222222" d="M31 18.5h1M36 22.5h1M35 38.5h2M39 38.5h1M41 39.5h1M42 40.5h1M43 41.5h1M29 43.5h1M44 49.5h1"/><path stroke="#333333" d="M46 7.5h1M32 14.5h1M41 16.5h1M2 19.5h1M1 23.5h1M3 23.5h1M3 24.5h1M34 38.5h1M29 42.5h1M44 43.5h1M45 45.5h1"/><path stroke="#444444" d="M34 2.5h1M25 6.5h1M5 8.5h1M33 11.5h1M40 13.5h1M13 15.5h1M1 16.5h1M37 21.5h1M45 21.5h1M48 27.5h1M20 29.5h1M5 32.5h1M38 32.5h1M29 36.5h1M33 38.5h1M40 38.5h1M9 40.5h1M29 41.5h2M44 41.5h2M44 42.5h1M45 43.5h1M0 44.5h1M28 44.5h1M7 45.5h1M28 45.5h1M28 46.5h1M45 46.5h1M28 48.5h1M45 48.5h1M9 49.5h1"/><path stroke="#555555" d="M22 0.5h1M39 0.5h1M33 1.5h1M42 2.5h1M25 3.5h1M35 3.5h1M1 4.5h1M0 5.5h1M34 6.5h1M4 9.5h1M47 9.5h1M25 11.5h1M12 12.5h1M32 15.5h1M23 16.5h1M19 19.5h1M46 21.5h1M33 22.5h1M27 23.5h1M35 24.5h1M3 26.5h1M40 28.5h1M12 31.5h1M36 31.5h1M38 31.5h1M23 33.5h1M12 34.5h1M37 37.5h1M32 38.5h1M41 38.5h1M9 39.5h1M21 39.5h1M30 40.5h1M43 40.5h1M7 41.5h1M18 42.5h1M45 44.5h1M25 47.5h1M28 47.5h1M46 47.5h1M49 47.5h1M45 49.5h1"/><path stroke="#666666" d="M9 0.5h1M16 0.5h1M45 0.5h1M37 1.5h1M48 2.5h1M18 6.5h1M15 7.5h1M20 7.5h1M35 7.5h1M31 9.5h1M37 10.5h1M22 11.5h1M39 11.5h1M31 12.5h1M0 13.5h1M6 14.5h1M8 16.5h1M20 16.5h1M39 17.5h1M10 18.5h1M10 20.5h1M14 20.5h1M28 21.5h1M33 21.5h2M4 22.5h1M21 22.5h1M23 22.5h1M38 22.5h1M43 22.5h1M29 23.5h1M6 24.5h1M15 24.5h1M9 25.5h1M25 26.5h1M5 28.5h1M16 29.5h1M31 30.5h2M38 30.5h1M9 31.5h1M31 32.5h1M35 33.5h1M8 34.5h1M15 34.5h1M2 36.5h1M7 36.5h1M24 36.5h1M30 36.5h1M38 36.5h1M46 36.5h1M15 37.5h1M34 37.5h3M38 37.5h2M49 37.5h1M0 38.5h1M23 38.5h1M19 39.5h1M42 39.5h2M45 40.5h1M49 40.5h1M7 42.5h1M17 42.5h1M1 43.5h1M14 43.5h1M2 44.5h1M27 45.5h1M19 46.5h1M25 46.5h1M27 46.5h1M48 46.5h1M15 47.5h1M27 47.5h1M45 47.5h1M7 48.5h1M19 48.5h1M26 48.5h1"/><path stroke="#777777" d="M7 0.5h1M10 0.5h1M40 0.5h1M0 1.5h1M2 1.5h1M18 1.5h1M31 1.5h2M22 2.5h2M3 3.5h1M7 3.5h1M16 3.5h1M40 3.5h1M48 3.5h1M16 4.5h1M34 4.5h1M36 4.5h1M42 4.5h3M49 4.5h1M1 5.5h1M5 5.5h1M7 5.5h1M14 5.5h1M21 5.5h1M29 5.5h1M47 5.5h1M0 6.5h1M7 6.5h1M44 6.5h1M14 7.5h1M28 7.5h1M43 7.5h1M42 8.5h1M49 8.5h1M15 9.5h1M30 9.5h1M2 10.5h1M5 10.5h1M23 10.5h1M18 12.5h1M2 13.5h1M13 13.5h1M17 13.5h1M25 13.5h1M29 13.5h1M4 14.5h1M9 14.5h1M40 14.5h1M46 15.5h1M13 16.5h1M25 16.5h1M32 16.5h1M34 16.5h1M49 16.5h1M5 17.5h1M26 17.5h1M32 17.5h1M7 18.5h1M28 18.5h1M35 18.5h1M9 19.5h2M13 19.5h1M20 19.5h1M42 19.5h1M25 20.5h1M28 20.5h1M32 20.5h1M6 21.5h1M8 21.5h1M17 21.5h1M20 21.5h1M1 22.5h1M21 23.5h1M34 23.5h2M48 23.5h1M4 24.5h1M21 25.5h1M28 25.5h1M34 25.5h1M36 25.5h1M12 26.5h1M19 26.5h1M2 27.5h2M30 27.5h1M40 27.5h1M39 28.5h1M10 29.5h1M25 29.5h1M33 29.5h1M43 29.5h2M13 30.5h1M24 30.5h1M20 31.5h1M24 31.5h1M4 32.5h1M17 32.5h1M19 32.5h1M22 32.5h1M40 32.5h1M44 32.5h1M46 32.5h1M10 33.5h1M22 33.5h1M14 34.5h1M36 34.5h1M41 34.5h1M13 35.5h1M23 35.5h1M26 35.5h1M0 36.5h1M47 36.5h1M33 37.5h1M31 38.5h1M42 38.5h2M3 39.5h1M30 39.5h2M44 39.5h1M3 40.5h1M14 40.5h1M27 40.5h2M0 41.5h1M8 41.5h1M13 41.5h1M28 42.5h1M11 43.5h1M46 43.5h1M3 45.5h1M46 45.5h1M12 46.5h1M46 46.5h1M8 47.5h1M24 48.5h1M46 48.5h2M12 49.5h1M23 49.5h1"/><path stroke="#888888" d="M1 0.5h1M3 0.5h1M15 0.5h1M1 1.5h1M3 1.5h1M6 1.5h1M15 1.5h1M19 1.5h1M24 1.5h1M34 1.5h1M41 1.5h1M2 2.5h1M16 2.5h1M18 2.5h1M28 2.5h1M30 2.5h1M43 2.5h1M1 3.5h1M9 3.5h1M14 3.5h1M19 3.5h1M29 3.5h1M47 3.5h1M5 4.5h1M17 4.5h1M21 4.5h1M29 4.5h1M8 5.5h1M16 6.5h1M28 6.5h1M33 6.5h1M36 6.5h2M45 6.5h1M38 7.5h1M40 7.5h1M1 8.5h2M33 8.5h1M37 8.5h1M48 8.5h1M2 9.5h1M8 9.5h1M24 9.5h1M32 9.5h1M35 9.5h1M37 9.5h1M39 9.5h1M46 9.5h1M6 10.5h1M30 10.5h1M45 10.5h1M0 11.5h1M10 11.5h1M21 11.5h1M23 11.5h2M34 11.5h1M38 11.5h1M41 11.5h1M11 12.5h1M42 12.5h1M27 13.5h1M30 13.5h1M38 13.5h1M42 13.5h1M11 14.5h1M27 14.5h1M39 14.5h1M48 14.5h1M4 15.5h1M6 15.5h1M9 16.5h1M14 16.5h1M16 16.5h1M35 16.5h1M8 17.5h1M38 17.5h1M43 17.5h1M3 18.5h1M8 18.5h2M36 18.5h1M40 18.5h1M42 18.5h1M45 18.5h1M8 20.5h2M34 20.5h1M10 21.5h1M29 21.5h1M9 22.5h1M18 22.5h1M40 23.5h1M8 24.5h2M14 24.5h1M20 24.5h1M33 24.5h1M45 24.5h1M49 24.5h1M11 25.5h2M17 25.5h1M41 25.5h1M17 26.5h1M20 26.5h1M29 26.5h2M37 26.5h1M13 27.5h1M24 27.5h1M35 27.5h2M0 28.5h1M7 28.5h1M13 28.5h1M24 28.5h1M27 28.5h1M30 28.5h1M32 28.5h1M17 29.5h1M26 29.5h1M31 29.5h1M47 29.5h2M0 30.5h1M4 30.5h1M11 31.5h1M13 31.5h1M17 31.5h1M34 31.5h1M4 33.5h1M14 33.5h1M19 33.5h1M21 33.5h1M24 33.5h1M29 33.5h1M34 33.5h1M44 33.5h1M49 33.5h1M0 34.5h1M5 34.5h2M10 34.5h1M25 34.5h1M32 34.5h1M39 34.5h1M46 34.5h2M7 35.5h1M14 35.5h1M16 35.5h1M19 35.5h1M24 35.5h1M34 35.5h2M38 35.5h1M40 35.5h1M47 35.5h1M4 36.5h1M9 36.5h1M17 36.5h1M22 36.5h1M25 36.5h1M7 37.5h1M13 37.5h1M31 37.5h2M44 37.5h1M2 38.5h1M13 38.5h1M15 38.5h1M29 38.5h1M11 39.5h1M18 39.5h1M10 40.5h1M19 40.5h1M23 40.5h1M44 40.5h1M5 41.5h1M24 41.5h2M28 41.5h1M12 42.5h1M14 42.5h1M25 42.5h1M27 42.5h1M45 42.5h1M8 43.5h1M16 43.5h1M27 43.5h2M47 43.5h1M3 44.5h1M46 44.5h1M49 44.5h1M5 45.5h1M16 45.5h1M19 45.5h1M24 45.5h1M3 47.5h1M16 47.5h1M20 48.5h1M49 48.5h1M5 49.5h1M28 49.5h1"/><path stroke="#999999" d="M20 0.5h1M24 0.5h1M29 0.5h1M33 0.5h1M35 0.5h1M37 0.5h1M43 0.5h2M49 0.5h1M10 1.5h4M27 1.5h1M40 1.5h1M44 1.5h1M46 1.5h1M49 1.5h1M10 2.5h1M20 2.5h1M31 2.5h1M37 2.5h2M44 2.5h1M8 3.5h1M12 3.5h1M15 3.5h1M24 3.5h1M26 3.5h1M42 3.5h1M0 4.5h1M33 4.5h1M2 5.5h1M13 5.5h1M16 5.5h2M44 5.5h1M3 6.5h1M17 6.5h1M41 6.5h2M47 6.5h1M1 7.5h1M4 7.5h1M9 7.5h2M16 7.5h1M22 7.5h1M48 7.5h1M29 8.5h1M44 8.5h2M3 9.5h1M5 9.5h1M11 9.5h1M16 9.5h2M20 9.5h1M7 10.5h1M9 10.5h1M12 10.5h1M25 10.5h1M36 10.5h1M39 10.5h1M2 11.5h1M4 11.5h3M28 11.5h1M47 11.5h1M49 11.5h1M2 12.5h2M26 12.5h1M35 12.5h1M37 12.5h1M41 12.5h1M47 12.5h1M49 12.5h1M4 13.5h1M19 13.5h1M21 13.5h2M34 13.5h1M36 13.5h1M17 14.5h1M22 14.5h1M33 14.5h1M43 14.5h1M1 15.5h2M21 15.5h1M27 15.5h2M33 15.5h1M40 15.5h1M47 15.5h1M0 16.5h1M2 16.5h1M10 16.5h1M12 16.5h1M18 16.5h1M37 16.5h2M44 16.5h2M9 17.5h1M22 17.5h1M30 17.5h1M44 17.5h2M47 17.5h1M1 18.5h1M12 18.5h1M21 18.5h1M3 19.5h1M5 19.5h1M21 19.5h1M23 19.5h1M31 19.5h1M44 19.5h1M46 19.5h1M2 20.5h1M16 20.5h1M19 20.5h1M35 20.5h1M38 20.5h1M41 20.5h1M44 20.5h1M0 21.5h1M3 21.5h1M12 21.5h1M21 21.5h1M35 21.5h1M5 22.5h1M10 22.5h1M14 22.5h1M22 22.5h1M25 22.5h1M27 22.5h2M41 22.5h1M9 23.5h1M15 23.5h1M18 23.5h1M22 23.5h1M25 23.5h1M38 23.5h1M41 23.5h1M43 23.5h1M47 23.5h1M0 24.5h2M7 24.5h1M21 24.5h1M43 24.5h1M46 24.5h1M24 25.5h1M27 25.5h1M45 25.5h1M0 26.5h1M14 26.5h1M33 26.5h1M36 26.5h1M43 26.5h1M45 26.5h1M48 26.5h2M4 27.5h1M9 27.5h2M19 27.5h1M32 27.5h1M34 27.5h1M39 27.5h1M46 27.5h1M26 28.5h1M33 28.5h1M1 29.5h2M5 29.5h1M19 29.5h1M12 30.5h1M16 30.5h1M18 30.5h2M36 30.5h1M43 30.5h1M45 30.5h2M49 30.5h1M7 31.5h2M15 31.5h1M28 31.5h1M42 31.5h2M3 32.5h1M12 32.5h1M14 32.5h1M21 32.5h1M26 32.5h1M33 32.5h1M48 32.5h2M3 33.5h1M7 33.5h1M9 33.5h1M11 33.5h1M15 33.5h1M36 33.5h1M40 33.5h2M43 33.5h1M2 34.5h1M20 34.5h2M30 34.5h1M40 34.5h1M45 34.5h1M49 34.5h1M8 35.5h1M15 35.5h1M21 35.5h1M39 35.5h1M41 35.5h1M44 35.5h2M1 36.5h1M13 36.5h1M21 36.5h1M31 36.5h1M33 36.5h1M36 36.5h1M48 36.5h2M0 37.5h1M4 37.5h1M6 37.5h1M10 37.5h1M40 37.5h2M45 37.5h3M1 38.5h1M8 38.5h1M12 38.5h1M19 38.5h1M47 38.5h1M0 39.5h1M7 39.5h1M28 39.5h2M2 40.5h1M6 40.5h1M47 40.5h2M47 42.5h2M6 43.5h1M10 43.5h1M12 43.5h1M20 43.5h1M22 43.5h1M25 43.5h2M16 44.5h1M2 45.5h1M14 45.5h1M22 45.5h1M10 46.5h1M13 46.5h1M20 46.5h2M24 46.5h1M17 47.5h1M19 47.5h1M48 47.5h1M4 48.5h1M48 48.5h1M3 49.5h1M10 49.5h2M27 49.5h1"/><path stroke="#aaaaaa" d="M13 0.5h1M19 0.5h1M23 0.5h1M36 0.5h1M7 1.5h1M9 1.5h1M16 1.5h1M20 1.5h2M28 1.5h1M42 1.5h1M48 1.5h1M3 2.5h1M6 2.5h2M9 2.5h1M24 2.5h1M35 2.5h2M40 2.5h1M46 2.5h1M0 3.5h1M5 3.5h2M10 3.5h1M17 3.5h1M21 3.5h2M27 3.5h1M33 3.5h1M37 3.5h2M43 3.5h2M2 4.5h2M7 4.5h1M9 4.5h1M11 4.5h3M24 4.5h1M32 4.5h1M47 4.5h1M10 5.5h1M12 5.5h1M22 5.5h1M24 5.5h1M39 5.5h1M1 6.5h2M12 6.5h3M20 6.5h1M22 6.5h1M24 6.5h1M31 6.5h1M38 6.5h3M5 7.5h1M8 7.5h1M12 7.5h1M17 7.5h1M19 7.5h1M21 7.5h1M24 7.5h1M30 7.5h1M33 7.5h1M47 7.5h1M4 8.5h1M6 8.5h1M10 8.5h1M16 8.5h1M23 8.5h1M25 8.5h1M30 8.5h1M32 8.5h1M34 8.5h1M39 8.5h1M7 9.5h1M19 9.5h1M36 9.5h1M48 9.5h1M1 10.5h1M3 10.5h1M8 10.5h1M17 10.5h4M29 10.5h1M41 10.5h1M43 10.5h2M48 10.5h1M8 11.5h1M11 11.5h1M14 11.5h1M16 11.5h1M19 11.5h1M32 11.5h1M36 11.5h1M40 11.5h1M16 12.5h1M25 12.5h1M39 12.5h1M43 12.5h1M6 13.5h1M10 13.5h2M14 13.5h1M20 13.5h1M23 13.5h1M28 13.5h1M31 13.5h1M39 13.5h1M45 13.5h1M49 13.5h1M0 14.5h1M2 14.5h1M5 14.5h1M15 14.5h1M21 14.5h1M26 14.5h1M29 14.5h1M41 14.5h1M45 14.5h2M9 15.5h1M11 15.5h2M14 15.5h1M16 15.5h1M22 15.5h1M24 15.5h1M29 15.5h1M36 15.5h1M42 15.5h1M11 16.5h1M15 16.5h1M33 16.5h1M39 16.5h1M4 17.5h1M13 17.5h2M17 17.5h2M20 17.5h1M25 17.5h1M33 17.5h2M37 17.5h1M40 17.5h2M11 18.5h1M14 18.5h1M16 18.5h1M18 18.5h1M22 18.5h2M41 18.5h1M43 18.5h1M8 19.5h1M11 19.5h1M24 19.5h1M27 19.5h2M30 19.5h1M33 19.5h2M36 19.5h1M38 19.5h1M47 19.5h1M49 19.5h1M0 20.5h2M6 20.5h2M12 20.5h1M15 20.5h1M20 20.5h1M23 20.5h2M26 20.5h1M31 20.5h1M36 20.5h1M45 20.5h1M48 20.5h1M7 21.5h1M30 21.5h1M36 21.5h1M49 21.5h1M0 22.5h1M15 22.5h1M26 22.5h1M32 22.5h1M37 22.5h1M42 22.5h1M48 22.5h1M2 23.5h1M6 23.5h1M8 23.5h1M17 23.5h1M20 23.5h1M30 23.5h1M33 23.5h1M36 23.5h1M39 23.5h1M45 23.5h1M49 23.5h1M5 24.5h1M16 24.5h2M19 24.5h1M24 24.5h1M30 24.5h1M38 24.5h2M42 24.5h1M47 24.5h1M0 25.5h2M3 25.5h2M13 25.5h2M18 25.5h2M22 25.5h2M32 25.5h2M42 25.5h1M49 25.5h1M9 26.5h2M18 26.5h1M24 26.5h1M34 26.5h1M40 26.5h1M42 26.5h1M46 26.5h1M15 27.5h1M18 27.5h1M29 27.5h1M31 27.5h1M37 27.5h1M43 27.5h3M12 28.5h1M15 28.5h2M22 28.5h1M44 28.5h2M0 29.5h1M4 29.5h1M18 29.5h1M36 29.5h1M39 29.5h1M41 29.5h1M46 29.5h1M49 29.5h1M3 30.5h1M14 30.5h2M21 30.5h1M30 30.5h1M39 30.5h1M0 31.5h1M3 31.5h1M6 31.5h1M14 31.5h1M18 31.5h1M25 31.5h1M30 31.5h1M33 31.5h1M40 31.5h1M46 31.5h1M48 31.5h1M2 32.5h1M7 32.5h1M15 32.5h1M28 32.5h1M34 32.5h1M42 32.5h1M45 32.5h1M5 33.5h2M13 33.5h1M16 33.5h2M20 33.5h1M25 33.5h1M28 33.5h1M48 33.5h1M1 34.5h1M4 34.5h1M7 34.5h1M16 34.5h1M18 34.5h1M22 34.5h1M37 34.5h2M44 34.5h1M48 34.5h1M1 35.5h1M4 35.5h1M10 35.5h1M28 35.5h1M30 35.5h3M36 35.5h2M46 35.5h1M8 36.5h1M16 36.5h1M18 36.5h2M28 36.5h1M35 36.5h1M37 36.5h1M9 37.5h1M12 37.5h1M21 37.5h1M26 37.5h1M28 37.5h1M30 37.5h1M6 38.5h1M11 38.5h1M20 38.5h2M28 38.5h1M30 38.5h1M2 39.5h1M4 39.5h3M16 39.5h1M45 39.5h1M49 39.5h1M1 40.5h1M7 40.5h1M13 40.5h1M18 40.5h1M1 41.5h1M3 41.5h2M6 41.5h1M10 41.5h1M12 41.5h1M19 41.5h1M21 41.5h1M3 42.5h2M6 42.5h1M10 42.5h1M16 42.5h1M22 42.5h1M46 42.5h1M49 42.5h1M0 43.5h1M4 43.5h1M21 43.5h1M48 43.5h1M5 44.5h2M10 44.5h2M17 44.5h1M26 44.5h1M1 45.5h1M11 45.5h2M21 45.5h1M48 45.5h1M1 46.5h1M3 46.5h3M7 46.5h2M14 46.5h1M22 46.5h2M49 46.5h1M7 47.5h1M21 47.5h1M24 47.5h1M47 47.5h1M1 48.5h1M5 48.5h1M10 48.5h1M12 48.5h1M25 48.5h1M7 49.5h1M13 49.5h1M15 49.5h1M19 49.5h1M26 49.5h1M46 49.5h1"/><path stroke="#bbbbbb" d="M0 0.5h1M5 0.5h1M11 0.5h1M18 0.5h1M21 0.5h1M26 0.5h1M30 0.5h1M34 0.5h1M38 0.5h1M42 0.5h1M23 1.5h1M29 1.5h1M43 1.5h1M45 1.5h1M0 2.5h2M5 2.5h1M13 2.5h1M21 2.5h1M27 2.5h1M33 2.5h1M45 2.5h1M49 2.5h1M11 3.5h1M13 3.5h1M23 3.5h1M28 3.5h1M41 3.5h1M49 3.5h1M10 4.5h1M14 4.5h2M18 4.5h1M25 4.5h1M27 4.5h1M30 4.5h1M39 4.5h1M41 4.5h1M3 5.5h1M11 5.5h1M26 5.5h3M41 5.5h1M46 5.5h1M49 5.5h1M5 6.5h1M8 6.5h2M21 6.5h1M35 6.5h1M43 6.5h1M6 7.5h1M11 7.5h1M13 7.5h1M31 7.5h1M37 7.5h1M41 7.5h2M49 7.5h1M3 8.5h1M17 8.5h1M20 8.5h1M28 8.5h1M41 8.5h1M43 8.5h1M46 8.5h1M29 9.5h1M33 9.5h1M44 9.5h2M49 9.5h1M4 10.5h1M15 10.5h1M22 10.5h1M31 10.5h1M34 10.5h2M46 10.5h1M49 10.5h1M13 11.5h1M27 11.5h1M31 11.5h1M37 11.5h1M43 11.5h2M48 11.5h1M0 12.5h2M6 12.5h2M22 12.5h2M36 12.5h1M45 12.5h1M1 13.5h1M12 13.5h1M16 13.5h1M18 13.5h1M24 13.5h1M26 13.5h1M35 13.5h1M43 13.5h1M48 13.5h1M3 14.5h1M12 14.5h2M28 14.5h1M35 14.5h1M37 14.5h1M42 14.5h1M3 15.5h1M10 15.5h1M18 15.5h2M25 15.5h1M35 15.5h1M43 15.5h1M45 15.5h1M4 16.5h2M7 16.5h1M19 16.5h1M24 16.5h1M27 16.5h1M29 16.5h1M40 16.5h1M42 16.5h1M46 16.5h2M2 17.5h1M6 17.5h1M12 17.5h1M23 17.5h2M28 17.5h2M36 17.5h1M48 17.5h1M0 18.5h1M2 18.5h1M5 18.5h1M19 18.5h1M26 18.5h2M44 18.5h1M47 18.5h3M1 19.5h1M6 19.5h1M15 19.5h1M17 19.5h2M25 19.5h2M35 19.5h1M39 19.5h1M4 20.5h1M13 20.5h1M18 20.5h1M22 20.5h1M30 20.5h1M39 20.5h2M42 20.5h1M46 20.5h1M2 21.5h1M4 21.5h1M9 21.5h1M13 21.5h2M16 21.5h1M27 21.5h1M42 21.5h1M44 21.5h1M48 21.5h1M6 22.5h1M13 22.5h1M16 22.5h1M20 22.5h1M24 22.5h1M35 22.5h1M44 22.5h1M46 22.5h2M5 23.5h1M10 23.5h1M13 23.5h1M16 23.5h1M19 23.5h1M31 23.5h2M37 23.5h1M13 24.5h1M25 24.5h1M28 24.5h2M36 24.5h2M41 24.5h1M48 24.5h1M2 25.5h1M6 25.5h1M15 25.5h2M30 25.5h1M37 25.5h1M44 25.5h1M46 25.5h2M16 26.5h1M26 26.5h3M31 26.5h1M38 26.5h2M41 26.5h1M44 26.5h1M1 27.5h1M8 27.5h1M22 27.5h1M25 27.5h1M27 27.5h2M42 27.5h1M10 28.5h1M18 28.5h2M21 28.5h1M25 28.5h1M28 28.5h1M35 28.5h2M38 28.5h1M42 28.5h1M46 28.5h2M49 28.5h1M7 29.5h2M15 29.5h1M22 29.5h1M32 29.5h1M37 29.5h2M40 29.5h1M1 30.5h2M6 30.5h2M10 30.5h1M27 30.5h1M35 30.5h1M41 30.5h2M47 30.5h2M5 31.5h1M27 31.5h1M32 31.5h1M41 31.5h1M45 31.5h1M0 32.5h1M8 32.5h1M13 32.5h1M18 32.5h1M20 32.5h1M23 32.5h2M29 32.5h1M36 32.5h2M43 32.5h1M8 33.5h1M27 33.5h1M30 33.5h1M32 33.5h1M37 33.5h1M39 33.5h1M42 33.5h1M45 33.5h1M19 34.5h1M24 34.5h1M31 34.5h1M33 34.5h1M35 34.5h1M0 35.5h1M11 35.5h2M17 35.5h1M20 35.5h1M22 35.5h1M33 35.5h1M48 35.5h1M10 36.5h1M12 36.5h1M14 36.5h1M20 36.5h1M32 36.5h1M39 36.5h1M43 36.5h1M19 37.5h2M23 37.5h1M25 37.5h1M43 37.5h1M14 38.5h1M16 38.5h1M22 38.5h1M25 38.5h2M44 38.5h1M48 38.5h2M10 39.5h1M14 39.5h1M17 39.5h1M22 39.5h1M0 40.5h1M4 40.5h1M24 40.5h3M29 40.5h1M2 41.5h1M9 41.5h1M18 41.5h1M20 41.5h1M23 41.5h1M47 41.5h1M49 41.5h1M8 42.5h1M20 42.5h1M23 42.5h1M2 43.5h1M15 43.5h1M18 43.5h1M23 43.5h1M14 44.5h1M27 44.5h1M9 45.5h2M17 45.5h2M47 45.5h1M15 46.5h1M2 47.5h1M9 47.5h1M11 47.5h1M13 47.5h1M18 47.5h1M26 47.5h1M2 48.5h1M6 48.5h1M8 48.5h1M11 48.5h1M22 48.5h2M27 48.5h1M2 49.5h1M16 49.5h1M20 49.5h1M48 49.5h1"/><path stroke="#cccccc" d="M2 0.5h1M6 0.5h1M27 0.5h2M31 0.5h2M41 0.5h1M47 0.5h1M5 1.5h1M8 1.5h1M38 1.5h1M12 2.5h1M17 2.5h1M19 2.5h1M26 2.5h1M39 2.5h1M47 2.5h1M31 3.5h1M46 3.5h1M6 4.5h1M20 4.5h1M22 4.5h1M40 4.5h1M48 4.5h1M6 5.5h1M15 5.5h1M18 5.5h1M25 5.5h1M30 5.5h1M34 5.5h2M40 5.5h1M4 6.5h1M19 6.5h1M23 6.5h1M26 6.5h1M32 6.5h1M48 6.5h2M0 7.5h1M7 7.5h1M25 7.5h1M27 7.5h1M36 7.5h1M39 7.5h1M44 7.5h1M9 8.5h1M13 8.5h1M21 8.5h1M26 8.5h2M31 8.5h1M38 8.5h1M21 9.5h3M38 9.5h1M40 9.5h1M21 10.5h1M24 10.5h1M38 10.5h1M42 10.5h1M47 10.5h1M3 11.5h1M7 11.5h1M29 11.5h2M35 11.5h1M45 11.5h1M8 12.5h1M19 12.5h1M24 12.5h1M27 12.5h1M30 12.5h1M34 12.5h1M38 12.5h1M40 12.5h1M3 13.5h1M7 13.5h2M33 13.5h1M44 13.5h1M7 14.5h2M14 14.5h1M16 14.5h1M18 14.5h1M20 14.5h1M23 14.5h1M30 14.5h1M34 14.5h1M36 14.5h1M47 14.5h1M8 15.5h1M15 15.5h1M20 15.5h1M23 15.5h1M31 15.5h1M37 15.5h1M44 15.5h1M49 15.5h1M22 16.5h1M31 16.5h1M43 16.5h1M1 17.5h1M3 17.5h1M11 17.5h1M16 17.5h1M35 17.5h1M46 17.5h1M49 17.5h1M4 18.5h1M6 18.5h1M15 18.5h1M29 18.5h2M37 18.5h3M4 19.5h1M12 19.5h1M16 19.5h1M37 19.5h1M40 19.5h1M43 19.5h1M48 19.5h1M3 20.5h1M5 20.5h1M11 20.5h1M17 20.5h1M27 20.5h1M29 20.5h1M5 21.5h1M15 21.5h1M19 21.5h1M22 21.5h1M24 21.5h2M31 21.5h2M40 21.5h2M43 21.5h1M2 22.5h1M8 22.5h1M12 22.5h1M19 22.5h1M30 22.5h2M40 22.5h1M4 23.5h1M11 23.5h1M28 23.5h1M42 23.5h1M44 23.5h1M2 24.5h1M10 24.5h1M22 24.5h2M27 24.5h1M31 24.5h2M34 24.5h1M44 24.5h1M5 25.5h1M25 25.5h2M31 25.5h1M35 25.5h1M38 25.5h2M43 25.5h1M2 26.5h1M6 26.5h2M11 26.5h1M13 26.5h1M15 26.5h1M22 26.5h1M35 26.5h1M5 27.5h3M11 27.5h1M14 27.5h1M21 27.5h1M23 27.5h1M33 27.5h1M38 27.5h1M49 27.5h1M3 28.5h1M6 28.5h1M8 28.5h1M29 28.5h1M31 28.5h1M41 28.5h1M48 28.5h1M9 29.5h1M21 29.5h1M23 29.5h2M28 29.5h1M5 30.5h1M9 30.5h1M11 30.5h1M20 30.5h1M22 30.5h2M25 30.5h1M28 30.5h1M33 30.5h1M37 30.5h1M2 31.5h1M16 31.5h1M21 31.5h2M26 31.5h1M35 31.5h1M37 31.5h1M39 31.5h1M1 32.5h1M6 32.5h1M11 32.5h1M30 32.5h1M32 32.5h1M35 32.5h1M47 32.5h1M1 33.5h1M26 33.5h1M46 33.5h2M3 34.5h1M27 34.5h1M2 35.5h1M18 35.5h1M29 35.5h1M43 35.5h1M5 36.5h1M11 36.5h1M15 36.5h1M26 36.5h1M34 36.5h1M41 36.5h2M44 36.5h1M1 37.5h2M5 37.5h1M11 37.5h1M29 37.5h1M42 37.5h1M7 38.5h1M9 38.5h1M18 38.5h1M24 38.5h1M27 38.5h1M45 38.5h1M1 39.5h1M12 39.5h1M24 39.5h1M46 39.5h1M8 40.5h1M15 40.5h1M21 40.5h2M11 41.5h1M14 41.5h1M16 41.5h1M22 41.5h1M27 41.5h1M46 41.5h1M1 42.5h1M9 42.5h1M13 42.5h1M15 42.5h1M19 42.5h1M5 43.5h1M7 43.5h1M9 43.5h1M19 43.5h1M49 43.5h1M9 44.5h1M22 44.5h1M47 44.5h1M0 45.5h1M8 45.5h1M6 46.5h1M16 46.5h2M47 46.5h1M0 47.5h2M10 47.5h1M14 47.5h1M22 47.5h1M9 48.5h1M14 48.5h2M21 48.5h1M6 49.5h1M8 49.5h1"/><path stroke="#dddddd" d="M4 0.5h1M8 0.5h1M12 0.5h1M25 0.5h1M48 0.5h1M14 1.5h1M22 1.5h1M25 1.5h2M35 1.5h1M4 2.5h1M11 2.5h1M29 2.5h1M32 2.5h1M4 3.5h1M18 3.5h1M30 3.5h1M34 3.5h1M36 3.5h1M39 3.5h1M8 4.5h1M26 4.5h1M31 4.5h1M35 4.5h1M37 4.5h1M45 4.5h2M9 5.5h1M19 5.5h1M23 5.5h1M32 5.5h2M37 5.5h1M43 5.5h1M10 6.5h1M15 6.5h1M27 6.5h1M29 6.5h1M2 7.5h1M29 7.5h1M32 7.5h1M7 8.5h1M11 8.5h2M15 8.5h1M40 8.5h1M47 8.5h1M0 9.5h1M6 9.5h1M18 9.5h1M25 9.5h1M28 9.5h1M41 9.5h3M13 10.5h2M16 10.5h1M27 10.5h2M9 11.5h1M18 11.5h1M20 11.5h1M26 11.5h1M42 11.5h1M46 11.5h1M5 12.5h1M17 12.5h1M20 12.5h2M46 12.5h1M15 13.5h1M37 13.5h1M41 13.5h1M46 13.5h1M10 14.5h1M24 14.5h2M49 14.5h1M7 15.5h1M26 15.5h1M30 15.5h1M21 16.5h1M26 16.5h1M30 16.5h1M36 16.5h1M48 16.5h1M7 17.5h1M15 17.5h1M19 17.5h1M27 17.5h1M42 17.5h1M13 18.5h1M20 18.5h1M24 18.5h2M32 18.5h1M34 18.5h1M7 19.5h1M14 19.5h1M41 19.5h1M33 20.5h1M47 20.5h1M1 21.5h1M3 22.5h1M11 22.5h1M29 22.5h1M45 22.5h1M49 22.5h1M12 23.5h1M26 23.5h1M26 24.5h1M40 24.5h1M7 25.5h2M10 25.5h1M29 25.5h1M1 26.5h1M21 26.5h1M32 26.5h1M47 26.5h1M26 27.5h1M41 27.5h1M1 28.5h1M4 28.5h1M9 28.5h1M14 28.5h1M37 28.5h1M6 29.5h1M11 29.5h1M13 29.5h1M34 29.5h1M45 29.5h1M29 30.5h1M34 30.5h1M40 30.5h1M44 30.5h1M4 31.5h1M10 31.5h1M19 31.5h1M29 31.5h1M49 31.5h1M9 32.5h2M16 32.5h1M41 32.5h1M2 33.5h1M12 33.5h1M18 33.5h1M31 33.5h1M33 33.5h1M38 33.5h1M9 34.5h1M17 34.5h1M23 34.5h1M34 34.5h1M42 35.5h1M3 36.5h1M23 36.5h1M27 36.5h1M18 37.5h1M27 37.5h1M48 37.5h1M4 38.5h2M46 38.5h1M8 39.5h1M13 39.5h1M23 39.5h1M25 39.5h2M48 39.5h1M12 40.5h1M16 40.5h2M46 40.5h1M5 42.5h1M11 42.5h1M21 42.5h1M3 43.5h1M13 43.5h1M17 43.5h1M4 44.5h1M12 44.5h1M18 44.5h2M21 44.5h1M23 44.5h1M25 44.5h1M48 44.5h1M4 45.5h1M13 45.5h1M20 45.5h1M25 45.5h2M49 45.5h1M0 46.5h1M9 46.5h1M12 47.5h1M20 47.5h1M23 47.5h1M16 48.5h1M0 49.5h1M17 49.5h1M25 49.5h1M49 49.5h1"/><path stroke="#eeeeee" d="M14 0.5h1M46 0.5h1M17 1.5h1M30 1.5h1M39 1.5h1M8 2.5h1M14 2.5h1M25 2.5h1M41 2.5h1M2 3.5h1M20 3.5h1M28 4.5h1M38 5.5h1M42 5.5h1M11 6.5h1M34 7.5h1M0 8.5h1M8 8.5h1M19 8.5h1M24 8.5h1M36 8.5h1M1 9.5h1M12 9.5h3M27 9.5h1M34 9.5h1M11 10.5h1M32 10.5h1M40 10.5h1M12 11.5h1M15 11.5h1M4 12.5h1M9 12.5h2M13 12.5h2M28 12.5h1M32 12.5h1M9 13.5h1M47 13.5h1M19 14.5h1M31 14.5h1M44 14.5h1M5 15.5h1M39 15.5h1M6 16.5h1M28 16.5h1M10 17.5h1M21 17.5h1M31 17.5h1M17 18.5h1M33 18.5h1M46 18.5h1M0 19.5h1M22 19.5h1M29 19.5h1M32 19.5h1M45 19.5h1M21 20.5h1M43 20.5h1M49 20.5h1M26 21.5h1M38 21.5h2M47 21.5h1M7 22.5h1M34 22.5h1M14 23.5h1M24 23.5h1M18 24.5h1M8 26.5h1M12 27.5h1M16 27.5h2M20 27.5h1M47 27.5h1M17 28.5h1M23 28.5h1M34 28.5h1M43 28.5h1M3 29.5h1M14 29.5h1M27 29.5h1M29 29.5h2M35 29.5h1M42 29.5h1M26 30.5h1M23 31.5h1M44 31.5h1M27 32.5h1M11 34.5h1M29 34.5h1M43 34.5h1M3 35.5h1M9 35.5h1M25 35.5h1M27 35.5h1M49 35.5h1M6 36.5h1M40 36.5h1M45 36.5h1M16 37.5h2M22 37.5h1M10 38.5h1M17 38.5h1M15 39.5h1M20 39.5h1M5 40.5h1M20 40.5h1M15 41.5h1M17 41.5h1M48 41.5h1M0 42.5h1M24 43.5h1M1 44.5h1M7 44.5h2M13 44.5h1M15 44.5h1M15 45.5h1M23 45.5h1M18 46.5h1M26 46.5h1M4 47.5h3M13 48.5h1M17 48.5h2M1 49.5h1M14 49.5h1M22 49.5h1"/><path stroke="#ffffff" d="M17 0.5h1M4 1.5h1M36 1.5h1M47 1.5h1M15 2.5h1M32 3.5h1M4 4.5h1M19 4.5h1M23 4.5h1M38 4.5h1M4 5.5h1M20 5.5h1M31 5.5h1M36 5.5h1M45 5.5h1M48 5.5h1M6 6.5h1M30 6.5h1M46 6.5h1M3 7.5h1M18 7.5h1M23 7.5h1M26 7.5h1M45 7.5h1M14 8.5h1M18 8.5h1M22 8.5h1M35 8.5h1M9 9.5h2M26 9.5h1M0 10.5h1M10 10.5h1M26 10.5h1M33 10.5h1M1 11.5h1M17 11.5h1M15 12.5h1M29 12.5h1M33 12.5h1M44 12.5h1M48 12.5h1M5 13.5h1M32 13.5h1M1 14.5h1M38 14.5h1M0 15.5h1M17 15.5h1M34 15.5h1M38 15.5h1M41 15.5h1M48 15.5h1M3 16.5h1M17 16.5h1M0 17.5h1M37 20.5h1M18 21.5h1M23 21.5h1M17 22.5h1M39 22.5h1M0 23.5h1M7 23.5h1M23 23.5h1M46 23.5h1M11 24.5h2M20 25.5h1M40 25.5h1M48 25.5h1M5 26.5h1M23 26.5h1M0 27.5h1M2 28.5h1M11 28.5h1M20 28.5h1M12 29.5h1M8 30.5h1M17 30.5h1M1 31.5h1M31 31.5h1M47 31.5h1M25 32.5h1M39 32.5h1M0 33.5h1M13 34.5h1M26 34.5h1M28 34.5h1M42 34.5h1M5 35.5h2M3 37.5h1M8 37.5h1M14 37.5h1M24 37.5h1M3 38.5h1M27 39.5h1M47 39.5h1M11 40.5h1M26 41.5h1M2 42.5h1M24 42.5h1M26 42.5h1M20 44.5h1M24 44.5h1M6 45.5h1M2 46.5h1M11 46.5h1M0 48.5h1M3 48.5h1M4 49.5h1M18 49.5h1M21 49.5h1M24 49.5h1"/></g></svg>
<g fill="none" stroke="#505050" stroke-opacity="0.7" stroke-width="1.05"><circle cx="437.5" cy="217.5" r="22.6"/><circle cx="480.1" cy="210.4" r="22.6"/><circle cx="524.7" cy="203.9" r="22.6"/><circle cx="551.8" cy="236.9" r="22.6"/><circle cx="510.8" cy="244" r="22.6"/><circle cx="422" cy="259.5" r="22.6"/><circle cx="379.1" cy="267.5" r="22.6"/><circle cx="406.8" cy="303" r="22.6"/><circle cx="538.9" cy="279.5" r="22.6"/><circle cx="523.7" cy="319.2" r="22.6"/><circle cx="565.7" cy="312.1" r="22.6"/><circle cx="393" cy="343.4" r="22.6"/><circle cx="434.9" cy="336.3" r="22.6"/><circle cx="552.2" cy="355.7" r="22.6"/><circle cx="507" cy="362.2" r="22.6"/><circle cx="465" cy="369.9" r="22.6"/><circle cx="421.1" cy="379" r="22.6"/></g>
<g fill="none" stroke-width="1.5"><circle cx="466.7" cy="253.8" r="22.9" stroke="#e8262a"/><circle cx="451.8" cy="293.8" r="22.9" stroke="#2fd12f"/><circle cx="493.8" cy="286.4" r="22.9" stroke="#2a2ad8"/><circle cx="479.5" cy="330.1" r="22.9" stroke="#e8a532"/></g>
<path d="M474.5 296.6h7M478 293.1v7" stroke="#e8262a" stroke-width="1.5"/>
<svg x="340.6" y="460" width="274.4" height="272.9" viewBox="340.6 460 274.4 272.9">
<rect x="340.6" y="460" width="274.4" height="272.9" filter="url(#nz)"/>
<g fill="#000" filter="url(#bl3)" opacity="0.45">
<ellipse cx="371.1" cy="487.9" rx="14" ry="12"/>
<circle cx="496.4" cy="630.4" r="16"/>
<circle cx="477.5" cy="660.5" r="13"/>
<ellipse cx="568.8" cy="578.2" rx="9" ry="21" transform="rotate(-16 568.8 578.2)"/>
</g>
<g fill="#000" filter="url(#bl)">
<ellipse cx="371.1" cy="487.9" rx="9" ry="7.3"/>
<circle cx="496.4" cy="630.4" r="12.3"/>
<circle cx="477.5" cy="660.5" r="9.3"/>
<ellipse cx="568.8" cy="578.2" rx="5.8" ry="17.5" transform="rotate(-16 568.8 578.2)"/>
</g>
<g fill="#000" filter="url(#bl2)">
<circle cx="517.2" cy="486.2" r="3.3"/>
<circle cx="428.1" cy="553.9" r="3"/>
<circle cx="538.7" cy="577.1" r="3"/>
<circle cx="367.9" cy="582.4" r="2.6"/>
<circle cx="354" cy="593.2" r="2.6"/>
<circle cx="559.5" cy="618.6" r="2.8"/>
<circle cx="479.2" cy="681.4" r="4.2"/>
<circle cx="503.7" cy="708.9" r="4.2"/>
</g>
<g fill="#222" filter="url(#bl2)" opacity="0.55">
<circle cx="475.3" cy="486.9" r="3.2"/>
<circle cx="523.7" cy="559.9" r="3"/>
<circle cx="501.1" cy="684.2" r="2.5"/>
<circle cx="390.5" cy="660.5" r="2.2"/>
<circle cx="529" cy="719.6" r="3"/>
</g>
</svg>
<path d="M346 434L436.25 638.75M614 434L519.4 638.75" stroke="#ff1a1a" stroke-width="1.5" stroke-dasharray="4.5 3" fill="none"/>
<rect x="436.25" y="555.6" width="83.15" height="83.15" fill="none" stroke="#f22" stroke-width="1.3"/>
<svg x="200" y="740" width="320" height="190" viewBox="0 0 1280 760"><rect x="33" y="26" width="1232" height="682.4" fill="#fff"/><svg x="33" y="26" width="1232" height="682.4" viewBox="33 26 1232 682.4"><path d="M33 430H1265" stroke="#444" stroke-width="5"/><path d="M91 270V462M115 305V495M138 403V585M162 352V525M186 386V556M210 482V650M233 366V533M257 418V587M281 296V466M305 360V537M328 340V515M352 432V605M376 440V620M400 373V578M423 455V673M447 240V450M471 325V533M494 486V686M518 430V618M542 430V623M566 260V450M589 285V476M613 333V517M637 267V435M660 77V240M684 108V276M708 60V235M732 340V520M756 278V470M779 306V500M803 325V528M827 292V497M851 258V462M874 428V648M898 220V450M922 192V418M946 345V553M968 563V705M993 302V486M1017 318V502M1041 372V555M1064 478V665M1088 430V607M1112 255V427M1136 322V487M1159 256V418M1183 398V555M1207 288V443M1230 345V497M1254 493V650" stroke="#1f77b4" stroke-width="9"/><g fill="#1f77b4"><circle cx="91" cy="367" r="9.5"/><circle cx="115" cy="400" r="9.5"/><circle cx="138" cy="493" r="9.5"/><circle cx="162" cy="437" r="9.5"/><circle cx="186" cy="470" r="9.5"/><circle cx="210" cy="567" r="9.5"/><circle cx="233" cy="450" r="9.5"/><circle cx="257" cy="500" r="9.5"/><circle cx="281" cy="380" r="9.5"/><circle cx="305" cy="447" r="9.5"/><circle cx="328" cy="428" r="9.5"/><circle cx="352" cy="517" r="9.5"/><circle cx="376" cy="530" r="9.5"/><circle cx="400" cy="475" r="9.5"/><circle cx="423" cy="565" r="9.5"/><circle cx="447" cy="347" r="9.5"/><circle cx="471" cy="430" r="9.5"/><circle cx="494" cy="585" r="9.5"/><circle cx="518" cy="522" r="9.5"/><circle cx="542" cy="527" r="9.5"/><circle cx="566" cy="355" r="9.5"/><circle cx="589" cy="380" r="9.5"/><circle cx="613" cy="425" r="9.5"/><circle cx="637" cy="350" r="9.5"/><circle cx="660" cy="158" r="9.5"/><circle cx="684" cy="192" r="9.5"/><circle cx="708" cy="148" r="9.5"/><circle cx="732" cy="430" r="9.5"/><circle cx="756" cy="375" r="9.5"/><circle cx="779" cy="403" r="9.5"/><circle cx="803" cy="428" r="9.5"/><circle cx="827" cy="395" r="9.5"/><circle cx="851" cy="360" r="9.5"/><circle cx="874" cy="537" r="9.5"/><circle cx="898" cy="335" r="9.5"/><circle cx="922" cy="305" r="9.5"/><circle cx="946" cy="450" r="9.5"/><circle cx="968" cy="658" r="9.5"/><circle cx="993" cy="393" r="9.5"/><circle cx="1017" cy="410" r="9.5"/><circle cx="1041" cy="463" r="9.5"/><circle cx="1064" cy="572" r="9.5"/><circle cx="1088" cy="520" r="9.5"/><circle cx="1112" cy="340" r="9.5"/><circle cx="1136" cy="402" r="9.5"/><circle cx="1159" cy="337" r="9.5"/><circle cx="1183" cy="478" r="9.5"/><circle cx="1207" cy="365" r="9.5"/><circle cx="1230" cy="422" r="9.5"/><circle cx="1254" cy="570" r="9.5"/></g><path d="M138 450.0 L143 450.0 L148 450.0 L153 450.0 L158 450.0 L163 450.0 L168 450.0 L173 450.0 L178 450.0 L183 450.0 L188 450.0 L193 450.0 L198 450.0 L203 450.0 L208 450.0 L213 450.0 L218 450.0 L223 450.0 L228 450.0 L233 450.0 L238 450.0 L243 450.0 L248 450.0 L253 450.0 L258 450.0 L263 450.0 L268 450.0 L273 450.0 L278 450.0 L283 450.0 L288 450.0 L293 450.0 L298 450.0 L303 450.0 L308 450.0 L313 450.0 L318 450.0 L323 450.0 L328 450.0 L333 450.0 L338 450.0 L343 450.0 L348 450.0 L353 450.0 L358 450.0 L363 450.0 L368 450.0 L373 450.0 L378 450.0 L383 450.0 L388 450.0 L393 450.0 L398 450.0 L403 450.0 L408 450.0 L413 450.0 L418 450.0 L423 450.0 L428 450.0 L433 450.0 L438 450.0 L443 450.0 L448 450.0 L453 450.0 L458 450.0 L463 450.0 L468 450.0 L473 450.0 L478 450.0 L483 450.0 L488 450.0 L493 450.0 L498 450.0 L503 450.0 L508 450.0 L513 450.0 L518 450.0 L523 450.0 L528 450.0 L533 450.0 L538 450.0 L543 450.0 L548 449.9 L553 449.9 L558 449.8 L563 449.6 L568 449.3 L573 448.9 L578 448.2 L583 447.1 L588 445.4 L593 443.0 L598 439.4 L603 434.5 L608 427.8 L613 418.9 L618 407.4 L623 392.9 L628 375.4 L633 354.6 L638 330.8 L643 304.4 L648 276.3 L653 247.4 L658 219.1 L663 192.7 L668 169.9 L673 152.0 L678 140.2 L683 135.1 L688 137.3 L693 146.5 L698 162.1 L703 183.1 L708 208.2 L713 235.9 L718 264.7 L723 293.3 L728 320.5 L733 345.4 L738 367.4 L743 386.3 L748 402.0 L753 414.6 L758 424.5 L763 432.1 L768 437.7 L773 441.7 L778 444.5 L783 446.5 L788 447.8 L793 448.7 L798 449.2 L803 449.5 L808 449.7 L813 449.8 L818 449.9 L823 450.0 L828 450.0 L833 450.0 L838 450.0 L843 450.0 L848 450.0 L853 450.0 L858 450.0 L863 450.0 L868 450.0 L873 450.0 L878 450.0 L883 450.0 L888 450.0 L893 450.0 L898 450.0 L903 450.0 L908 450.0 L913 450.0 L918 450.0 L923 450.0 L928 450.0 L933 450.0 L938 450.0 L943 450.0 L948 450.0 L953 450.0 L958 450.0 L963 450.0 L968 450.0 L973 450.0 L978 450.0 L983 450.0 L988 450.0 L993 450.0 L998 450.0 L1003 450.0 L1008 450.0 L1013 450.0 L1018 450.0 L1023 450.0 L1028 450.0 L1033 450.0 L1038 450.0 L1043 450.0 L1048 450.0 L1053 450.0 L1058 450.0 L1063 450.0 L1068 450.0 L1073 450.0 L1078 450.0 L1083 450.0 L1088 450.0 L1093 450.0 L1098 450.0 L1103 450.0 L1108 450.0 L1113 450.0 L1118 450.0 L1123 450.0 L1128 450.0 L1133 450.0 L1138 450.0 L1143 450.0 L1148 450.0 L1153 450.0 L1158 450.0 L1163 450.0 L1168 450.0 L1173 450.0 L1178 450.0 L1183 450.0 L1188 450.0 L1193 450.0 L1198 450.0 L1203 450.0 L1208 450.0 L1213 450.0 L1218 450.0 L1223 450.0 L1228 450.0 L1233 450.0" fill="none" stroke="#3a3a3a" stroke-width="9"/></svg></svg></svg>
<div id="panel" class="abs"></div>
<div id="tut" class="abs"></div>
<div class="tab" style="left:835px;top:144px;">TASK</div>
<div class="tab" style="left:1066px;top:144px;letter-spacing:1.15px;">TUTORIAL</div>
<div class="q" style="left:768px;top:212px;letter-spacing:1.2px;">Is this a nearby or very distant galaxy?</div>
<div class="ans" style="top:254px;"><span style="left:23px;letter-spacing:1.45px;">Distant Galaxy or nothing</span></div>
<div class="ans" style="top:321px;"><span style="left:23px;letter-spacing:1.0px;">Nearby Galaxy or Star</span></div>
<div id="help" class="abs">NEED SOME HELP WITH THIS TASK?</div>
<div id="dtalk" class="abs"></div>
<div class="btxt" style="left:809px;top:481px;letter-spacing:0.9px;">Done &amp; Talk</div>
<div id="done" class="abs"></div>
<div class="btxt" style="left:1058.5px;top:483px;letter-spacing:0.2px;">Done</div>
<div id="edge" class="abs"></div>
<div id="fg" class="abs"></div>
<div id="fgt">FIELD GUIDE</div>
</body></html>
